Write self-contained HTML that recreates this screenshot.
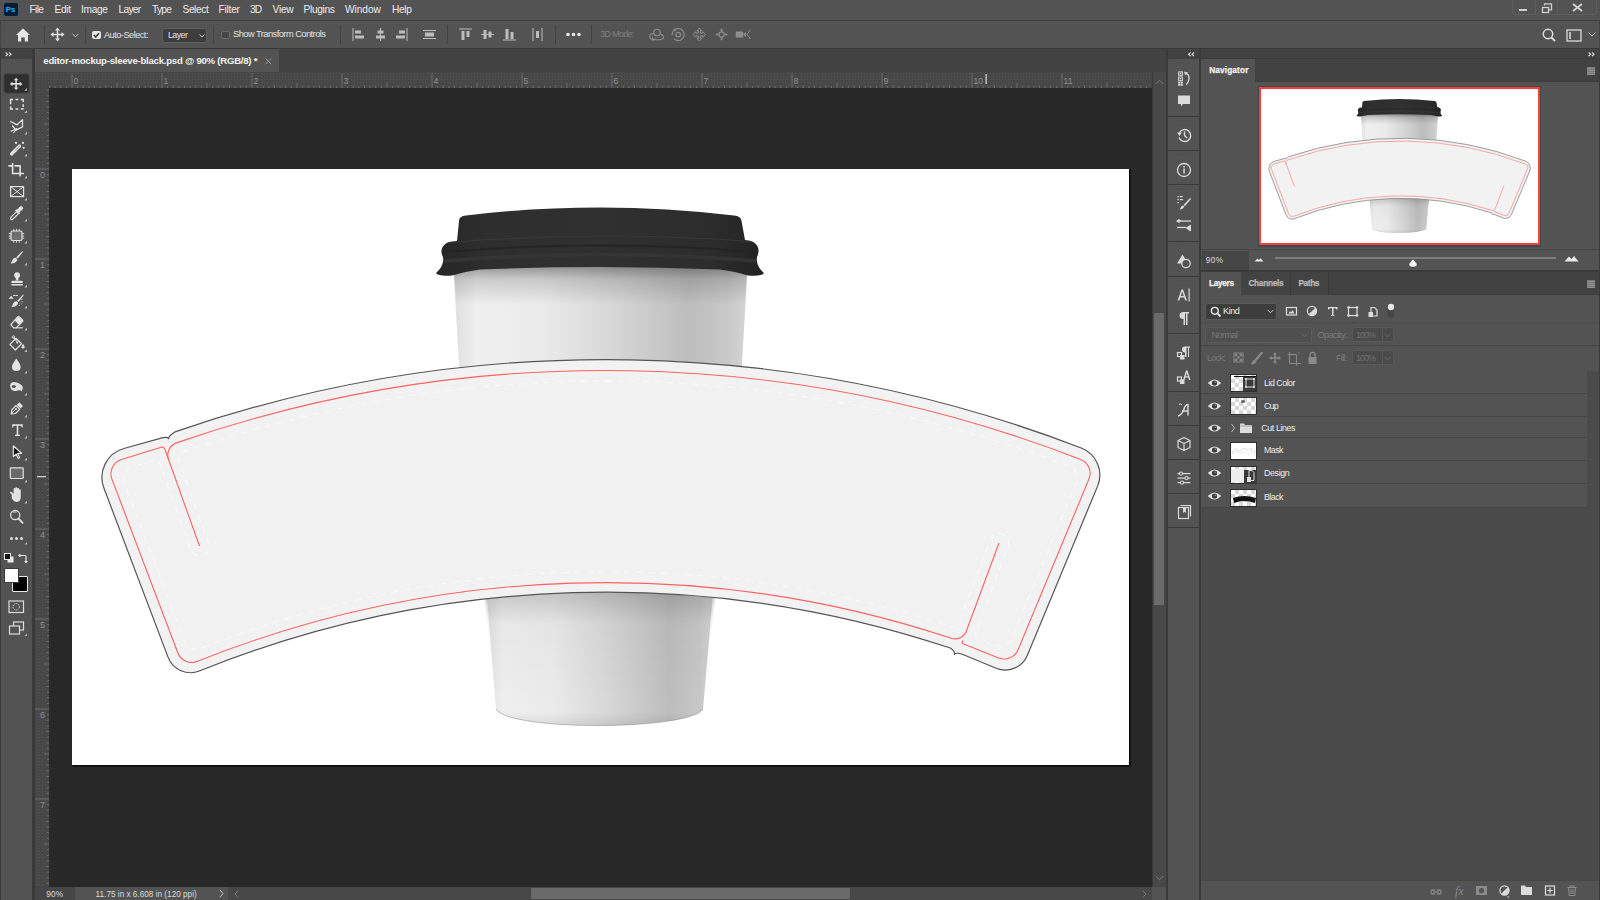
<!DOCTYPE html><html><head><meta charset='utf-8'><style>
*{margin:0;padding:0;box-sizing:border-box}
html,body{width:1600px;height:900px;overflow:hidden}
body{background:#535353;position:relative;font-family:"Liberation Sans",sans-serif;color:#e6e6e6;font-size:10px}
.a{position:absolute}
.t{position:absolute;white-space:nowrap;line-height:1}
svg{position:absolute;overflow:visible}
.dots2{background-color:#4b4b4b;background-image:radial-gradient(circle at 1px 1px,#505050 0.6px,transparent 0.7px);background-size:3px 3px}
.dots{background-color:#484848;background-image:radial-gradient(circle at 1px 1px,#525252 0.7px,transparent 0.8px);background-size:4px 4px}
</style></head><body><div class="a" style="left:0px;top:0px;width:1600px;height:20px;background:#535353;"></div>
<div class="a" style="left:0px;top:20px;width:1600px;height:1px;background:#3f3f3f;"></div>
<div class="a" style="left:4px;top:3px;width:14px;height:13px;background:#001e36;border-radius:2px"></div>
<div class="t" style="left:5.80px;top:5.83px;font-size:8px;color:#31a8ff;letter-spacing:0.000px;font-weight:bold;letter-spacing:-0.2px">Ps</div>
<div class="t" style="left:29.50px;top:5.27px;font-size:10.2px;color:#ececec;letter-spacing:-0.644px;">File</div>
<div class="t" style="left:54.50px;top:5.27px;font-size:10.2px;color:#ececec;letter-spacing:-0.358px;">Edit</div>
<div class="t" style="left:81.00px;top:5.27px;font-size:10.2px;color:#ececec;letter-spacing:-0.336px;">Image</div>
<div class="t" style="left:118.50px;top:5.27px;font-size:10.2px;color:#ececec;letter-spacing:-0.690px;">Layer</div>
<div class="t" style="left:151.90px;top:5.27px;font-size:10.2px;color:#ececec;letter-spacing:-0.671px;">Type</div>
<div class="t" style="left:182.50px;top:5.27px;font-size:10.2px;color:#ececec;letter-spacing:-0.419px;">Select</div>
<div class="t" style="left:218.50px;top:5.27px;font-size:10.2px;color:#ececec;letter-spacing:-0.233px;">Filter</div>
<div class="t" style="left:250.00px;top:5.27px;font-size:10.2px;color:#ececec;letter-spacing:-1.036px;">3D</div>
<div class="t" style="left:272.50px;top:5.27px;font-size:10.2px;color:#ececec;letter-spacing:-0.233px;">View</div>
<div class="t" style="left:303.50px;top:5.27px;font-size:10.2px;color:#ececec;letter-spacing:-0.326px;">Plugins</div>
<div class="t" style="left:345.00px;top:5.27px;font-size:10.2px;color:#ececec;letter-spacing:-0.060px;">Window</div>
<div class="t" style="left:392.00px;top:5.27px;font-size:10.2px;color:#ececec;letter-spacing:-0.327px;">Help</div>
<div class="a" style="left:1512px;top:-3px;width:85px;height:18px;border:1px solid #5e5e5e;border-radius:3px"></div>
<div class="a" style="left:1535px;top:0px;width:1px;height:15px;background:#5e5e5e;"></div>
<div class="a" style="left:1557px;top:0px;width:1px;height:15px;background:#5e5e5e;"></div>
<div class="a" style="left:1519px;top:9px;width:8px;height:2px;background:#d0d0d0;"></div>
<svg style="left:1541px;top:3px;" width="12" height="10" viewBox="0 0 12 10"><rect x="1.5" y="4.5" width="6" height="5" fill="none" stroke="#d0d0d0" stroke-width="1.3"/><path d="M3.5 2.5V0.8h7v6H8" fill="none" stroke="#d0d0d0" stroke-width="1.3"/></svg>
<svg style="left:1572px;top:3px;" width="11" height="9" viewBox="0 0 11 9"><path d="M1 1L10 8M10 1L1 8" stroke="#d6d6d6" stroke-width="1.6"/></svg>
<div class="a" style="left:0px;top:21px;width:1600px;height:27px;background:#535353;"></div>
<div class="a" style="left:0px;top:48px;width:1600px;height:1px;background:#383838;"></div>
<div class="a" style="left:0px;top:21px;width:1px;height:27px;background:#454545;"></div>
<div class="a" style="left:1599px;top:21px;width:1px;height:27px;background:#454545;"></div>
<div class="a" style="left:4px;top:26px;width:1px;height:17px;border-left:1px dotted #4a4a4a"></div>
<svg style="left:16px;top:28px;" width="14" height="14" viewBox="0 0 14 14"><path d="M7 0.5L14 7H12V13.5H8.8V9.5H5.2V13.5H2V7H0Z" fill="#e8e8e8"/></svg>
<div class="a" style="left:44px;top:25px;width:1px;height:19px;background:#424242;"></div>
<svg style="left:50px;top:27px;" width="15" height="15" viewBox="0 0 15 15"><path d="M7.5 0.5L10 3.5H8.3V6.7H11.5V5L14.5 7.5L11.5 10V8.3H8.3V11.5H10L7.5 14.5L5 11.5H6.7V8.3H3.5V10L0.5 7.5L3.5 5V6.7H6.7V3.5H5Z" fill="#e0e0e0"/></svg>
<svg style="left:72px;top:33px;" width="7" height="5" viewBox="0 0 7 5"><path d="M0.5 0.8L3.5 3.8L6.5 0.8" fill="none" stroke="#c8c8c8" stroke-width="1"/></svg>
<div class="a" style="left:85px;top:25px;width:1px;height:19px;background:#424242;"></div>
<div class="a" style="left:92px;top:30.5px;width:8.5px;height:8px;background:#e8e8e8;border-radius:2px"></div>
<svg style="left:92px;top:30.5px;" width="9" height="8" viewBox="0 0 9 8"><path d="M1.8 4L3.8 6L7 2.2" fill="none" stroke="#2a2a2a" stroke-width="1.5"/></svg>
<div class="t" style="left:104.00px;top:30.51px;font-size:9.2px;color:#e2e2e2;letter-spacing:-0.510px;">Auto-Select:</div>
<div class="a" style="left:162px;top:28px;width:45px;height:15px;background:#3d3d3d;border:1px solid #5e5e5e;border-radius:3px"></div>
<div class="t" style="left:168.00px;top:31.17px;font-size:8.9px;color:#e2e2e2;letter-spacing:-0.565px;">Layer</div>
<svg style="left:199px;top:34px;" width="6" height="4" viewBox="0 0 6 4"><path d="M0.5 0.5L3 3L5.5 0.5" fill="none" stroke="#c8c8c8" stroke-width="1"/></svg>
<div class="a" style="left:213px;top:25px;width:1px;height:19px;background:#424242;"></div>
<div class="a" style="left:221px;top:30.5px;width:8.5px;height:8px;background:#454545;border:1px solid #6a6a6a;border-radius:2px"></div>
<div class="t" style="left:233.00px;top:30.43px;font-size:9.3px;color:#e2e2e2;letter-spacing:-0.542px;">Show Transform Controls</div>
<div class="a" style="left:340px;top:25px;width:1px;height:19px;background:#424242;"></div>
<svg style="left:352px;top:28px;" width="13" height="13" viewBox="0 0 13 13"><rect x="0.5" y="0" width="1" height="13" fill="#bdbdbd"/><rect x="3" y="2.5" width="6" height="3" fill="#bdbdbd"/><rect x="3" y="7.5" width="9" height="3" fill="#bdbdbd"/></svg>
<svg style="left:374px;top:28px;" width="13" height="13" viewBox="0 0 13 13"><rect x="6" y="0" width="1" height="13" fill="#bdbdbd"/><rect x="3.5" y="2.5" width="6" height="3" fill="#bdbdbd"/><rect x="2" y="7.5" width="9" height="3" fill="#bdbdbd"/></svg>
<svg style="left:395px;top:28px;" width="13" height="13" viewBox="0 0 13 13"><rect x="11.5" y="0" width="1" height="13" fill="#bdbdbd"/><rect x="4" y="2.5" width="6" height="3" fill="#bdbdbd"/><rect x="1" y="7.5" width="9" height="3" fill="#bdbdbd"/></svg>
<svg style="left:422px;top:28px;" width="15" height="13" viewBox="0 0 15 13"><rect x="1" y="2" width="13" height="1" fill="#bdbdbd"/><rect x="3" y="4.5" width="9" height="4" fill="#bdbdbd"/><rect x="1" y="10" width="13" height="1" fill="#bdbdbd"/></svg>
<div class="a" style="left:447px;top:25px;width:1px;height:19px;background:#424242;"></div>
<svg style="left:459px;top:28px;" width="13" height="13" viewBox="0 0 13 13"><rect x="0" y="0.5" width="13" height="1" fill="#bdbdbd"/><rect x="2.5" y="3" width="3" height="9" fill="#bdbdbd"/><rect x="7.5" y="3" width="3" height="6" fill="#bdbdbd"/></svg>
<svg style="left:481px;top:28px;" width="13" height="13" viewBox="0 0 13 13"><rect x="0" y="6" width="13" height="1" fill="#bdbdbd"/><rect x="2.5" y="2" width="3" height="9" fill="#bdbdbd"/><rect x="7.5" y="3.5" width="3" height="6" fill="#bdbdbd"/></svg>
<svg style="left:503px;top:28px;" width="13" height="13" viewBox="0 0 13 13"><rect x="0" y="11.5" width="13" height="1" fill="#bdbdbd"/><rect x="2.5" y="1" width="3" height="10" fill="#bdbdbd"/><rect x="7.5" y="4" width="3" height="7" fill="#bdbdbd"/></svg>
<svg style="left:532px;top:28px;" width="11" height="13" viewBox="0 0 11 13"><rect x="0.5" y="0" width="1" height="13" fill="#bdbdbd"/><rect x="4" y="3" width="3" height="7" fill="#bdbdbd"/><rect x="9.5" y="0" width="1" height="13" fill="#bdbdbd"/></svg>
<div class="a" style="left:555px;top:25px;width:1px;height:19px;background:#424242;"></div>
<svg style="left:566px;top:32px;" width="15" height="5" viewBox="0 0 15 5"><circle cx="2" cy="2.5" r="1.8" fill="#e8e8e8"/><circle cx="7.5" cy="2.5" r="1.8" fill="#e8e8e8"/><circle cx="13" cy="2.5" r="1.8" fill="#e8e8e8"/></svg>
<div class="a" style="left:591px;top:25px;width:1px;height:19px;background:#424242;"></div>
<div class="t" style="left:600.00px;top:30.33px;font-size:9.3px;color:#7e7e7e;letter-spacing:-0.831px;">3D Mode:</div>
<svg style="left:640px;top:22px;" width="120" height="26" viewBox="0 0 120 26"><circle cx="17" cy="10.6" r="3.3" fill="none" stroke="#8e8e8e" stroke-width="1.1"/><path d="M13.8 11.5Q9.5 11.5 9.8 14.5Q10.2 17.5 14 17.8H19.5Q23.5 17.5 23.5 15Q23.3 12.8 20.3 12" fill="none" stroke="#8e8e8e" stroke-width="1.1"/><path d="M12 15.2L15.8 17.8L12 18.8Z" fill="#8e8e8e"/><circle cx="38.2" cy="12.5" r="6" fill="none" stroke="#8e8e8e" stroke-width="1.1" stroke-dasharray="30 4" transform="rotate(200 38.2 12.5)"/><circle cx="38.2" cy="12.5" r="2.3" fill="none" stroke="#8e8e8e" stroke-width="1.1"/><path d="M33.5 7L37 6.3L35 9.5Z" fill="#8e8e8e"/><path d="M59.4 6L61.8 8.6H60.4V11.1H62.9V9.7L65.5 12.5L62.9 15.3V13.9H60.4V16.4H61.8L59.4 19L57 16.4H58.4V13.9H55.9V15.3L53.3 12.5L55.9 9.7V11.1H58.4V8.6H57Z" fill="none" stroke="#8e8e8e" stroke-width="1"/><circle cx="81.6" cy="12.5" r="2.6" fill="none" stroke="#8e8e8e" stroke-width="1.2"/><path d="M81.6 6.3L83.3 8.5H79.9Z M81.6 18.7L83.3 16.5H79.9Z M75.4 12.5L77.6 10.8V14.2Z M87.8 12.5L85.6 10.8V14.2Z" fill="#8e8e8e"/><path d="M81.6 8.5V9.9M81.6 15.1V16.5M77.6 12.5H79M84.2 12.5H85.6" stroke="#8e8e8e" stroke-width="1.2"/><rect x="95.7" y="9.5" width="7.5" height="6" fill="#8e8e8e"/><path d="M103 12.5L106 10V15Z" fill="#8e8e8e"/><path d="M110.5 8L107 12.5L110.5 17" fill="none" stroke="#8e8e8e" stroke-width="1"/></svg>
<svg style="left:1542px;top:28px;" width="15" height="14" viewBox="0 0 15 14"><circle cx="6" cy="6" r="4.7" fill="none" stroke="#e0e0e0" stroke-width="1.5"/><path d="M9.3 9.3L13 13" stroke="#e0e0e0" stroke-width="1.8"/></svg>
<svg style="left:1566px;top:29px;" width="16" height="13" viewBox="0 0 16 13"><rect x="1" y="1" width="14" height="11" fill="none" stroke="#dadada" stroke-width="1.3"/><rect x="3" y="3" width="2" height="7" fill="#bdbdbd"/></svg>
<svg style="left:1588px;top:32px;" width="8" height="5" viewBox="0 0 8 5"><path d="M0.5 0.5L4 4L7.5 0.5" fill="none" stroke="#c8c8c8" stroke-width="1"/></svg>
<div class="a" style="left:0px;top:49px;width:1600px;height:851px;background:#3a3a3a;"></div>
<div class="a" style="left:1px;top:49px;width:31px;height:10px;background:#424242;"></div>
<svg style="left:4.5px;top:51.5px;" width="7" height="4.5" viewBox="0 0 7 4.5"><path d="M0.6 0.3L2.6 2.2L0.6 4.1M4 0.3L6 2.2L4 4.1" fill="none" stroke="#e8e8e8" stroke-width="1.1"/></svg>
<div class="a" style="left:1px;top:59px;width:31px;height:841px;background:#535353;"></div>
<div class="a" style="left:35px;top:49px;width:1131px;height:23px;background:#424242;"></div>
<div class="a" style="left:35px;top:49px;width:244px;height:23px;background:#535353;"></div>
<div class="t" style="left:43.30px;top:55.67px;font-size:9.6px;color:#f2f2f2;letter-spacing:-0.247px;font-weight:bold;">editor-mockup-sleeve-black.psd @ 90% (RGB/8) *</div>
<svg style="left:264.5px;top:57.5px;" width="7" height="7" viewBox="0 0 7 7"><path d="M0.5 0.5L6.2 6.2M6.2 0.5L0.5 6.2" stroke="#a0a0a0" stroke-width="0.9"/></svg>
<div class="a" style="left:35px;top:72px;width:1117px;height:16px;background:#474747;background-image:radial-gradient(circle at 1.5px 1.5px,#525252 0.55px,transparent 0.9px);background-size:3px 3px"></div>
<div class="a" style="left:35px;top:88px;width:14px;height:799px;background:#474747;background-image:radial-gradient(circle at 1.5px 1.5px,#525252 0.55px,transparent 0.9px);background-size:3px 3px"></div>
<div class="a" style="left:49px;top:88px;width:1103px;height:799px;background:#282828;"></div>
<div class="a" style="left:1152px;top:72px;width:14px;height:815px;background:#4a4a4a;background-image:radial-gradient(circle at 1px 1px,#434343 0.5px,transparent 0.8px);background-size:2px 2px"></div>
<div class="a" style="left:1152px;top:72px;width:1px;height:815px;background:#393939;"></div>
<svg style="left:1155px;top:79px;" width="9" height="6" viewBox="0 0 9 6"><path d="M0.8 5L4.5 1.3L8.2 5" fill="none" stroke="#7a7a7a" stroke-width="1"/></svg>
<div class="a" style="left:1154px;top:313px;width:10px;height:292px;background:#6a6a6a;"></div>
<svg style="left:1155px;top:875px;" width="9" height="6" viewBox="0 0 9 6"><path d="M0.8 1L4.5 4.7L8.2 1" fill="none" stroke="#7a7a7a" stroke-width="1"/></svg>
<div class="a" style="left:35px;top:887px;width:1131px;height:13px;background:#535353;"></div>
<div class="a" style="left:35px;top:887px;width:40px;height:13px;background:#474747;background-image:radial-gradient(circle at 1px 1px,#434343 0.5px,transparent 0.8px);background-size:2px 2px"></div>
<div class="t" style="left:46.25px;top:891.26px;font-size:8.2px;color:#dcdcdc;letter-spacing:0.246px;">90%</div>
<div class="t" style="left:95.60px;top:891.26px;font-size:8.2px;color:#dcdcdc;letter-spacing:0.009px;">11.75 in x 6.608 in (120 ppi)</div>
<svg style="left:219px;top:889px;" width="5" height="9" viewBox="0 0 5 9"><path d="M0.8 0.8L4 4.5L0.8 8.2" fill="none" stroke="#c8c8c8" stroke-width="1"/></svg>
<div class="a" style="left:228px;top:887px;width:924px;height:13px;background:#4a4a4a;background-image:radial-gradient(circle at 1px 1px,#434343 0.5px,transparent 0.8px);background-size:2px 2px"></div>
<svg style="left:234px;top:890px;" width="5" height="8" viewBox="0 0 5 8"><path d="M4 0.8L1 4L4 7.2" fill="none" stroke="#7a7a7a" stroke-width="1"/></svg>
<div class="a" style="left:531px;top:888px;width:319px;height:11px;background:#6a6a6a;"></div>
<svg style="left:1142px;top:890px;" width="5" height="8" viewBox="0 0 5 8"><path d="M1 0.8L4 4L1 7.2" fill="none" stroke="#7a7a7a" stroke-width="1"/></svg>
<div class="a" style="left:1168px;top:49px;width:31px;height:10px;background:#424242;"></div>
<svg style="left:1188px;top:51.5px;" width="7" height="4.5" viewBox="0 0 7 4.5"><path d="M2.6 0.3L0.6 2.2L2.6 4.1M6 0.3L4 2.2L6 4.1" fill="none" stroke="#e8e8e8" stroke-width="1.1"/></svg>
<div class="a" style="left:1168px;top:59px;width:31px;height:57px;background:#535353;"></div>
<div class="a" style="left:1176px;top:62px;width:14px;height:1px;border-top:1px dotted #4c4c4c"></div>
<div class="a" style="left:1168px;top:117px;width:31px;height:33px;background:#535353;"></div>
<div class="a" style="left:1176px;top:120px;width:14px;height:1px;border-top:1px dotted #4c4c4c"></div>
<div class="a" style="left:1168px;top:151px;width:31px;height:33px;background:#535353;"></div>
<div class="a" style="left:1176px;top:154px;width:14px;height:1px;border-top:1px dotted #4c4c4c"></div>
<div class="a" style="left:1168px;top:185px;width:31px;height:56px;background:#535353;"></div>
<div class="a" style="left:1176px;top:188px;width:14px;height:1px;border-top:1px dotted #4c4c4c"></div>
<div class="a" style="left:1168px;top:242px;width:31px;height:34px;background:#535353;"></div>
<div class="a" style="left:1176px;top:245px;width:14px;height:1px;border-top:1px dotted #4c4c4c"></div>
<div class="a" style="left:1168px;top:277px;width:31px;height:56px;background:#535353;"></div>
<div class="a" style="left:1176px;top:280px;width:14px;height:1px;border-top:1px dotted #4c4c4c"></div>
<div class="a" style="left:1168px;top:334px;width:31px;height:57px;background:#535353;"></div>
<div class="a" style="left:1176px;top:337px;width:14px;height:1px;border-top:1px dotted #4c4c4c"></div>
<div class="a" style="left:1168px;top:392px;width:31px;height:33px;background:#535353;"></div>
<div class="a" style="left:1176px;top:395px;width:14px;height:1px;border-top:1px dotted #4c4c4c"></div>
<div class="a" style="left:1168px;top:426px;width:31px;height:33px;background:#535353;"></div>
<div class="a" style="left:1176px;top:429px;width:14px;height:1px;border-top:1px dotted #4c4c4c"></div>
<div class="a" style="left:1168px;top:460px;width:31px;height:33px;background:#535353;"></div>
<div class="a" style="left:1176px;top:463px;width:14px;height:1px;border-top:1px dotted #4c4c4c"></div>
<div class="a" style="left:1168px;top:494px;width:31px;height:33px;background:#535353;"></div>
<div class="a" style="left:1176px;top:497px;width:14px;height:1px;border-top:1px dotted #4c4c4c"></div>
<div class="a" style="left:1168px;top:528px;width:31px;height:372px;background:#535353;"></div>
<div class="a" style="left:1201px;top:49px;width:399px;height:10px;background:#424242;"></div>
<svg style="left:1588px;top:51.5px;" width="7" height="4.5" viewBox="0 0 7 4.5"><path d="M0.6 0.3L2.6 2.2L0.6 4.1M4 0.3L6 2.2L4 4.1" fill="none" stroke="#e8e8e8" stroke-width="1.1"/></svg>
<div class="a" style="left:1201px;top:59px;width:398px;height:23px;background:#424242;"></div>
<div class="a" style="left:1201px;top:59px;width:54px;height:23px;background:#535353;"></div>
<div class="t" style="left:1209.20px;top:65.57px;font-size:8.3px;color:#f0f0f0;letter-spacing:0.115px;font-weight:bold;-webkit-text-stroke:0.25px currentColor">Navigator</div>
<svg style="left:1587px;top:66.5px;" width="8" height="8" viewBox="0 0 8 8"><rect x="0" y="0.5" width="8" height="1.2" fill="#b0b0b0"/><rect x="0" y="2.5" width="8" height="1.2" fill="#b0b0b0"/><rect x="0" y="4.5" width="8" height="1.2" fill="#b0b0b0"/><rect x="0" y="6.5" width="8" height="1.2" fill="#b0b0b0"/></svg>
<div class="a" style="left:1201px;top:58px;width:398px;height:1px;background:#3a3a3a;"></div>
<div class="a" style="left:1255px;top:81px;width:344px;height:1px;background:#3c3c3c;"></div>
<div class="a" style="left:1201px;top:82px;width:398px;height:167px;background:#535353;"></div>
<div class="a" style="left:1258px;top:86px;width:283px;height:161px;background:#3d4848;"></div>
<div class="a" style="left:1259px;top:87px;width:281px;height:158px;background:#ff3c3c;"></div>
<div class="a" style="left:1261px;top:89px;width:277px;height:154px;background:#ffffff;"></div>
<div class="a" style="left:1201px;top:249px;width:398px;height:1px;background:#474747;"></div>
<div class="a" style="left:1201px;top:250px;width:398px;height:20px;background:#535353;"></div>
<div class="a" style="left:1202px;top:251px;width:47px;height:19px;background:#474747;background-image:radial-gradient(circle at 1px 1px,#434343 0.5px,transparent 0.8px);background-size:2px 2px"></div>
<div class="t" style="left:1205.70px;top:257.36px;font-size:8.2px;color:#dcdcdc;letter-spacing:0.446px;">90%</div>
<svg style="left:1254px;top:257px;" width="10" height="5" viewBox="0 0 10 5"><path d="M0.5 4.5L3.5 1.5L5 3L6.5 1.2L9.5 4.5Z" fill="#e8e8e8"/></svg>
<div class="a" style="left:1275px;top:257px;width:281px;height:2px;background:#7c7c7c;"></div>
<svg style="left:1407.5px;top:257.5px;" width="10" height="10" viewBox="0 0 10 10"><path d="M5 0.6L9.2 5.8Q9.6 9.3 5 9.3Q0.4 9.3 0.8 5.8Z" fill="#f0f0f0" stroke="#3a3a3a" stroke-width="0.8"/></svg>
<svg style="left:1564px;top:255px;" width="15" height="7" viewBox="0 0 15 7"><path d="M0.5 6.5L5 1.5L7.5 4L10 1L14.5 6.5Z" fill="#e8e8e8"/></svg>
<div class="a" style="left:1201px;top:272px;width:398px;height:23px;background:#424242;"></div>
<div class="a" style="left:1201px;top:272px;width:40px;height:23px;background:#535353;"></div>
<div class="a" style="left:1241px;top:272px;width:49px;height:23px;background:#434343;"></div>
<div class="a" style="left:1290px;top:272px;width:38px;height:23px;background:#434343;"></div>
<div class="a" style="left:1290px;top:273px;width:1px;height:22px;background:#3a3a3a;"></div>
<div class="a" style="left:1328px;top:273px;width:1px;height:22px;background:#3a3a3a;"></div>
<div class="t" style="left:1209.00px;top:278.77px;font-size:8.3px;color:#f0f0f0;letter-spacing:-0.334px;font-weight:bold;-webkit-text-stroke:0.25px currentColor">Layers</div>
<div class="t" style="left:1248.40px;top:278.77px;font-size:8.3px;color:#b8b8b8;letter-spacing:-0.294px;font-weight:bold;-webkit-text-stroke:0.25px currentColor">Channels</div>
<div class="t" style="left:1298.40px;top:278.77px;font-size:8.3px;color:#b8b8b8;letter-spacing:-0.375px;font-weight:bold;-webkit-text-stroke:0.25px currentColor">Paths</div>
<svg style="left:1587px;top:279.5px;" width="8" height="8" viewBox="0 0 8 8"><rect x="0" y="0.5" width="8" height="1.2" fill="#b0b0b0"/><rect x="0" y="2.5" width="8" height="1.2" fill="#b0b0b0"/><rect x="0" y="4.5" width="8" height="1.2" fill="#b0b0b0"/><rect x="0" y="6.5" width="8" height="1.2" fill="#b0b0b0"/></svg>
<div class="a" style="left:1328px;top:294px;width:271px;height:1px;background:#3c3c3c;"></div>
<div class="a" style="left:1201px;top:295px;width:398px;height:605px;background:#535353;"></div>
<div class="a" style="left:1205px;top:303px;width:72px;height:17px;background:#3d3d3d;border:1px solid #5a5a5a;border-radius:3px"></div>
<svg style="left:1210px;top:306px" width="12" height="12" viewBox="0 0 12 12"><circle cx="4.8" cy="4.8" r="3.4" fill="none" stroke="#e8e8e8" stroke-width="1.4"/><path d="M7.2 7.2L10.5 10.5" stroke="#e8e8e8" stroke-width="1.8"/></svg>
<div class="t" style="left:1223.10px;top:306.78px;font-size:9px;color:#ececec;letter-spacing:-0.470px;">Kind</div>
<svg style="left:1267px;top:309px" width="7" height="5" viewBox="0 0 7 5"><path d="M0.5 0.8L3.5 3.8L6.5 0.8" fill="none" stroke="#c8c8c8" stroke-width="1"/></svg>
<svg style="left:1284px;top:302px" width="116" height="18" viewBox="0 0 116 18"><rect x="2.5" y="5.5" width="10" height="7.5" fill="none" stroke="#dcdcdc" stroke-width="1.2"/><path d="M4.5 11.5L6 9L7 10.5L8.5 8L10.5 11.5Z" fill="#dcdcdc"/><circle cx="28" cy="9" r="4.6" fill="none" stroke="#dcdcdc" stroke-width="1.2"/><path d="M31.3 5.7A4.6 4.6 0 0 1 24.7 12.3Z" fill="#dcdcdc"/><path d="M44 5H53.5V7.5H52.5Q52.3 6.3 51 6.3H49.5V12.5Q49.5 13 50.5 13V13.8H47V13Q48 13 48 12.5V6.3H46.5Q45.2 6.3 45 7.5H44Z" fill="#dcdcdc"/><rect x="64.5" y="5.5" width="8.5" height="8" fill="none" stroke="#dcdcdc" stroke-width="1.2"/><circle cx="64.5" cy="5.5" r="1.3" fill="#dcdcdc"/><circle cx="73" cy="5.5" r="1.3" fill="#dcdcdc"/><circle cx="64.5" cy="13.5" r="1.3" fill="#dcdcdc"/><circle cx="73" cy="13.5" r="1.3" fill="#dcdcdc"/><path d="M87 5.5H90.5L93 8V14H87Z" fill="none" stroke="#dcdcdc" stroke-width="1.2"/><rect x="84.5" y="10" width="4.5" height="5" fill="#dcdcdc"/><rect x="103.5" y="1.5" width="7" height="14" rx="3.5" fill="#454545" stroke="#4d4d4d" stroke-width="0.8"/><circle cx="107" cy="5" r="3.2" fill="#e8e8e8"/></svg>
<div class="a" style="left:1201px;top:322px;width:398px;height:1px;border-top:1px dotted #474747"></div>
<div class="a" style="left:1205px;top:327px;width:107px;height:16px;background:#4f4f4f;border:1px solid #5a5a5a;border-radius:3px"></div>
<div class="t" style="left:1211.50px;top:330.68px;font-size:9px;color:#7a7a7a;letter-spacing:-0.481px;">Normal</div>
<svg style="left:1301px;top:333px" width="7" height="5" viewBox="0 0 7 5"><path d="M0.5 0.8L3.5 3.8L6.5 0.8" fill="none" stroke="#6a6a6a" stroke-width="1"/></svg>
<div class="t" style="left:1317.50px;top:330.68px;font-size:9px;color:#7a7a7a;letter-spacing:-0.430px;">Opacity:</div>
<div class="a" style="left:1352px;top:327px;width:42px;height:15px;background:#4a4a4a;border:1px solid #595959;border-radius:2px"></div>
<div class="a" style="left:1382px;top:327px;width:1px;height:15px;background:#595959"></div>
<div class="t" style="left:1356.00px;top:330.68px;font-size:9px;color:#707070;letter-spacing:-1.007px;">100%</div>
<svg style="left:1384px;top:333px" width="7" height="5" viewBox="0 0 7 5"><path d="M0.5 0.8L3.5 3.8L6.5 0.8" fill="none" stroke="#6a6a6a" stroke-width="1"/></svg>
<div class="a" style="left:1201px;top:345px;width:398px;height:1px;background:#474747"></div>
<div class="t" style="left:1207.00px;top:353.88px;font-size:9px;color:#7a7a7a;letter-spacing:-0.728px;">Lock:</div>
<svg style="left:1230px;top:349px" width="95" height="18" viewBox="0 0 95 18" fill="#8a8a8a"><rect x="4" y="4" width="9" height="9" fill="none" stroke="#8a8a8a" stroke-width="1"/><rect x="5" y="5" width="2.3" height="2.3"/><rect x="9.7" y="5" width="2.3" height="2.3"/><rect x="7.3" y="7.3" width="2.3" height="2.3"/><rect x="5" y="9.7" width="2.3" height="2.3"/><rect x="9.7" y="9.7" width="2.3" height="2.3"/><path d="M31.8 3.8L25.8 11" stroke="#8a8a8a" stroke-width="2.2" stroke-linecap="round"/><path d="M24.8 11Q22.3 11.3 21.8 13.8L20.8 15.6Q24.5 15.8 26.3 13.2Z"/><path d="M45 3L47 5.5H45.7V8.3H48.5V7L51 9L48.5 11V9.7H45.7V12.5H47L45 15L43 12.5H44.3V9.7H41.5V11L39 9L41.5 7V8.3H44.3V5.5H43Z"/><path d="M59.5 3V14.5H71M57.5 5.5H66.5V16.5" fill="none" stroke="#8a8a8a" stroke-width="1"/><path d="M68 3L70 4.5" stroke="#8a8a8a" stroke-width="0.8"/><path d="M80 8V6Q80 3.3 82.5 3.3Q85 3.3 85 6V8" fill="none" stroke="#8a8a8a" stroke-width="1.3"/><rect x="78.5" y="8" width="8" height="7"/></svg>
<div class="t" style="left:1336.00px;top:353.88px;font-size:9px;color:#7a7a7a;letter-spacing:-0.624px;">Fill:</div>
<div class="a" style="left:1352px;top:350px;width:42px;height:15px;background:#4a4a4a;border:1px solid #595959;border-radius:2px"></div>
<div class="a" style="left:1382px;top:350px;width:1px;height:15px;background:#595959"></div>
<div class="t" style="left:1356.00px;top:353.88px;font-size:9px;color:#707070;letter-spacing:-1.007px;">100%</div>
<svg style="left:1384px;top:356px" width="7" height="5" viewBox="0 0 7 5"><path d="M0.5 0.8L3.5 3.8L6.5 0.8" fill="none" stroke="#6a6a6a" stroke-width="1"/></svg>
<div class="a dots2" style="left:1201px;top:508px;width:386px;height:372px"></div>
<div class="a dots2" style="left:1587px;top:371px;width:12px;height:509px"></div>
<div class="a" style="left:1201px;top:371px;width:386px;height:23px;background:#535353;border-bottom:1px solid #474747"></div>
<div class="a" style="left:1226px;top:371px;width:1px;height:23px;background:#4c4c4c"></div>
<svg style="left:1207px;top:377.5px" width="15" height="10" viewBox="0 0 15 10"><path d="M0.8 5Q7.5 -2 14.2 5Q7.5 12 0.8 5Z" fill="#e4e4e4"/><circle cx="7.5" cy="5" r="2.6" fill="#3c3c3c"/><circle cx="8.3" cy="4.2" r="0.8" fill="#9a9a9a"/></svg>
<div class="t" style="left:1264.00px;top:379.17px;font-size:8.9px;color:#ececec;letter-spacing:-0.502px;">Lid Color</div>
<div class="a" style="left:1201px;top:394px;width:386px;height:23px;background:#535353;border-bottom:1px solid #474747"></div>
<div class="a" style="left:1226px;top:394px;width:1px;height:23px;background:#4c4c4c"></div>
<svg style="left:1207px;top:400.5px" width="15" height="10" viewBox="0 0 15 10"><path d="M0.8 5Q7.5 -2 14.2 5Q7.5 12 0.8 5Z" fill="#e4e4e4"/><circle cx="7.5" cy="5" r="2.6" fill="#3c3c3c"/><circle cx="8.3" cy="4.2" r="0.8" fill="#9a9a9a"/></svg>
<div class="t" style="left:1264.00px;top:402.17px;font-size:8.9px;color:#ececec;letter-spacing:-0.811px;">Cup</div>
<div class="a" style="left:1201px;top:417px;width:386px;height:21px;background:#535353;border-bottom:1px solid #474747"></div>
<div class="a" style="left:1226px;top:417px;width:1px;height:21px;background:#4c4c4c"></div>
<svg style="left:1207px;top:422.5px" width="15" height="10" viewBox="0 0 15 10"><path d="M0.8 5Q7.5 -2 14.2 5Q7.5 12 0.8 5Z" fill="#e4e4e4"/><circle cx="7.5" cy="5" r="2.6" fill="#3c3c3c"/><circle cx="8.3" cy="4.2" r="0.8" fill="#9a9a9a"/></svg>
<svg style="left:1229px;top:421.5px" width="26" height="12" viewBox="0 0 26 12"><path d="M2.5 2L5.5 6L2.5 10" fill="none" stroke="#bdbdbd" stroke-width="1"/><path d="M11 1.5H15L16 3H23V11H11Z" fill="#dcdcdc"/><rect x="11" y="3.5" width="12" height="0.8" fill="#9a9a9a"/></svg>
<div class="t" style="left:1261.30px;top:424.17px;font-size:8.9px;color:#ececec;letter-spacing:-0.413px;">Cut Lines</div>
<div class="a" style="left:1201px;top:438px;width:386px;height:23px;background:#535353;border-bottom:1px solid #474747"></div>
<div class="a" style="left:1226px;top:438px;width:1px;height:23px;background:#4c4c4c"></div>
<svg style="left:1207px;top:444.5px" width="15" height="10" viewBox="0 0 15 10"><path d="M0.8 5Q7.5 -2 14.2 5Q7.5 12 0.8 5Z" fill="#e4e4e4"/><circle cx="7.5" cy="5" r="2.6" fill="#3c3c3c"/><circle cx="8.3" cy="4.2" r="0.8" fill="#9a9a9a"/></svg>
<div class="t" style="left:1264.00px;top:446.17px;font-size:8.9px;color:#ececec;letter-spacing:-0.560px;">Mask</div>
<div class="a" style="left:1201px;top:461px;width:386px;height:23px;background:#535353;border-bottom:1px solid #474747"></div>
<div class="a" style="left:1226px;top:461px;width:1px;height:23px;background:#4c4c4c"></div>
<svg style="left:1207px;top:467.5px" width="15" height="10" viewBox="0 0 15 10"><path d="M0.8 5Q7.5 -2 14.2 5Q7.5 12 0.8 5Z" fill="#e4e4e4"/><circle cx="7.5" cy="5" r="2.6" fill="#3c3c3c"/><circle cx="8.3" cy="4.2" r="0.8" fill="#9a9a9a"/></svg>
<div class="t" style="left:1264.00px;top:469.17px;font-size:8.9px;color:#ececec;letter-spacing:-0.381px;">Design</div>
<div class="a" style="left:1201px;top:484px;width:386px;height:24px;background:#535353;border-bottom:1px solid #474747"></div>
<div class="a" style="left:1226px;top:484px;width:1px;height:24px;background:#4c4c4c"></div>
<svg style="left:1207px;top:491.0px" width="15" height="10" viewBox="0 0 15 10"><path d="M0.8 5Q7.5 -2 14.2 5Q7.5 12 0.8 5Z" fill="#e4e4e4"/><circle cx="7.5" cy="5" r="2.6" fill="#3c3c3c"/><circle cx="8.3" cy="4.2" r="0.8" fill="#9a9a9a"/></svg>
<div class="t" style="left:1264.00px;top:492.67px;font-size:8.9px;color:#ececec;letter-spacing:-0.545px;">Black</div>
<div class="a" style="left:1230px;top:373.5px;width:27px;height:18px;border:1px solid #2e2e2e;background-color:#fff;background-image:linear-gradient(45deg,#d8d8d8 25%,transparent 25%,transparent 75%,#d8d8d8 75%),linear-gradient(45deg,#d8d8d8 25%,transparent 25%,transparent 75%,#d8d8d8 75%);background-size:8px 8px;background-position:0 0,4px 4px"><div class="a" style="left:12px;top:1px;width:13px;height:15px;background:#3a3a3a"></div><div class="a" style="left:3px;top:1px;width:22px;height:1px;background:#111"></div></div>
<svg style="left:1244px;top:377px" width="12" height="12" viewBox="0 0 12 12"><rect x="2" y="2" width="8" height="8" fill="none" stroke="#e0e0e0" stroke-width="1"/><circle cx="2" cy="2" r="1.1" fill="#e0e0e0"/><circle cx="10" cy="2" r="1.1" fill="#e0e0e0"/><circle cx="2" cy="10" r="1.1" fill="#e0e0e0"/><circle cx="10" cy="10" r="1.1" fill="#e0e0e0"/></svg>
<div class="a" style="left:1230px;top:396.5px;width:27px;height:18px;border:1px solid #2e2e2e;background-color:#fff;background-image:linear-gradient(45deg,#d8d8d8 25%,transparent 25%,transparent 75%,#d8d8d8 75%),linear-gradient(45deg,#d8d8d8 25%,transparent 25%,transparent 75%,#d8d8d8 75%);background-size:8px 8px;background-position:0 0,4px 4px"><div class="a" style="left:10px;top:2px;width:4px;height:3px;background:#666;border-radius:2px"></div></div>
<div class="a" style="left:1230px;top:442px;width:27px;height:18px;border:1px solid #2e2e2e;background:#fff"></div>
<svg style="left:1231px;top:446px" width="25" height="10" viewBox="0 0 25 10"><path d="M1 6L5 3L9 5L13 2L17 4L21 3L24 6" fill="none" stroke="#b0b0b0" stroke-width="0.8" stroke-dasharray="1 1"/><path d="M1 8L5 5L9 8L13 5L17 8L21 5L24 8" fill="none" stroke="#c8c8c8" stroke-width="0.7" stroke-dasharray="1 1"/></svg>
<div class="a" style="left:1230px;top:465.5px;width:27px;height:18px;border:1px solid #2e2e2e;background-color:#fff;background-image:linear-gradient(45deg,#d8d8d8 25%,transparent 25%,transparent 75%,#d8d8d8 75%),linear-gradient(45deg,#d8d8d8 25%,transparent 25%,transparent 75%,#d8d8d8 75%);background-size:8px 8px;background-position:0 0,4px 4px"><div class="a" style="left:0;top:2px;width:13px;height:13px;background:#eee"></div><div class="a" style="left:13px;top:3px;width:13px;height:14px;background:#3a3a3a"></div></div>
<svg style="left:1245px;top:469px" width="11" height="14" viewBox="0 0 11 14"><path d="M4 1.5H7L9 3.5V11.5H4Z" fill="none" stroke="#e0e0e0" stroke-width="1"/><rect x="2" y="8" width="4" height="5" fill="#e0e0e0"/></svg>
<div class="a" style="left:1230px;top:488.5px;width:27px;height:18px;border:1px solid #2e2e2e;background-color:#fff;background-image:linear-gradient(45deg,#d8d8d8 25%,transparent 25%,transparent 75%,#d8d8d8 75%),linear-gradient(45deg,#d8d8d8 25%,transparent 25%,transparent 75%,#d8d8d8 75%);background-size:8px 8px;background-position:0 0,4px 4px"><svg class="a" style="left:1px;top:3px" width="25" height="12" viewBox="0 0 25 12"><path d="M1 5Q12 1 24 5L23 10Q12 6 2 10Z" fill="#111"/></svg></div>
<div class="a" style="left:1201px;top:880px;width:398px;height:1px;background:#474747"></div>
<svg style="left:1425px;top:881px" width="160" height="19" viewBox="0 0 160 19"><path d="M10 9H8Q6 9 6 11Q6 13 8 13H10M12 9H14Q16 9 16 11Q16 13 14 13H12M8.5 11H13.5" fill="none" stroke="#8a8a8a" stroke-width="1.3"/><text x="30" y="14" font-size="12" font-style="italic" fill="#8a8a8a" font-family="Liberation Serif">fx</text><rect x="51" y="5" width="11" height="9" fill="#8a8a8a"/><circle cx="56.5" cy="9.5" r="2.6" fill="#535353"/><circle cx="79.5" cy="9.5" r="4.6" fill="none" stroke="#dcdcdc" stroke-width="1.2"/><path d="M82.8 6.2A4.6 4.6 0 0 1 76.2 12.8Z" fill="#dcdcdc"/><path d="M82 15.5L84.5 15.5L83.2 17Z" fill="#dcdcdc"/><path d="M96 4.5H100L101 6H107V14H96Z" fill="#dcdcdc"/><rect x="120.5" y="5" width="9" height="9" fill="none" stroke="#dcdcdc" stroke-width="1.2"/><path d="M125 6.8V12.2M122.3 9.5H127.7" stroke="#dcdcdc" stroke-width="1.2"/><path d="M142.5 6.5H151.5M145 6.5V5H149V6.5M143.5 6.5L144.3 14.5H149.7L150.5 6.5M146 8V13M148 8V13" fill="none" stroke="#8a8a8a" stroke-width="1.1"/></svg>
<div class="a" style="left:8px;top:62px;width:17px;height:1px;border-top:1px dotted #4c4c4c"></div>
<svg style="left:0;top:0" width="32" height="660" viewBox="0 0 32 660"><rect x="4" y="74" width="25" height="19" rx="2" fill="#2f2f2f" stroke="#3f3f3f" stroke-width="1"/><path d="M16.1 77.7L18.5 80.3H16.9V83.1H19.7V81.5L22.4 83.9L19.7 86.3V84.7H16.9V87.5H18.5L16.1 90.1L13.7 87.5H15.3V84.7H12.5V86.3L9.9 83.9L12.5 81.5V83.1H15.3V80.3H13.7Z" fill="#dcdcdc"/><path d="M27 88V90.7H24.3Z" fill="#b8b8b8"/><path d="M10.6 102V99.5H13 M15.5 99.5H18.3 M20.8 99.5H23.2V102 M23.2 104.3V107 M23.2 109.2V109H20.8 M18.3 109H15.5 M13 109H10.6V106.6 M10.6 104.3V101.5" fill="none" stroke="#e2e2e2" stroke-width="1.5"/><path d="M27 110.3V113.0H24.3Z" fill="#b8b8b8"/><path d="M10.3 121.4L17.1 124.8L22.5 119.6V126.9L16 130.2L12.2 125.5" fill="none" stroke="#e2e2e2" stroke-width="1.3" stroke-linejoin="round"/><path d="M10.6 131.5L17 128.3M13.5 133L16.3 129" fill="none" stroke="#e2e2e2" stroke-width="1.2"/><path d="M27 131.8V134.5H24.3Z" fill="#b8b8b8"/><path d="M11.5 154L19.6 146" stroke="#e2e2e2" stroke-width="3.2" stroke-linecap="round"/><path d="M15.5 150.1L19.6 146" stroke="#8a8a8a" stroke-width="0.9" stroke-linecap="round"/><circle cx="16" cy="142.9" r="1.1" fill="#e2e2e2"/><circle cx="23" cy="142.9" r="1.1" fill="#e2e2e2"/><circle cx="23.7" cy="147.8" r="1.1" fill="#e2e2e2"/><path d="M27 153.8V156.5H24.3Z" fill="#b8b8b8"/><path d="M8.4 165.9H12.6 M12.6 162.9V173.5H21 M14.5 165.9H20.1V176.5 M20.1 173.5H23.9" fill="none" stroke="#e2e2e2" stroke-width="1.6"/><path d="M27 175.8V178.5H24.3Z" fill="#b8b8b8"/><rect x="10.6" y="186.6" width="13" height="10" fill="none" stroke="#e2e2e2" stroke-width="1.2"/><path d="M10.6 186.6L23.6 196.6M23.6 186.6L10.6 196.6" stroke="#e2e2e2" stroke-width="1"/><path d="M27 197.8V200.5H24.3Z" fill="#b8b8b8"/><path d="M11.2 219.5Q10 218.3 11 217.2L16.6 211.5L18.6 213.4L13 219.1Q12 220.2 11.2 219.5Z" fill="none" stroke="#e2e2e2" stroke-width="1.2"/><path d="M16 210.5L20 206.6Q21.3 205.5 22.6 206.8Q23.8 208 22.7 209.3L18.7 213.3Z" fill="#e2e2e2"/><path d="M15.6 209.7L19.6 213.7" stroke="#e2e2e2" stroke-width="1.6"/><path d="M27 218.8V221.5H24.3Z" fill="#b8b8b8"/><rect x="11" y="231" width="11" height="9.5" rx="1.5" fill="#6e6e6e" stroke="#e2e2e2" stroke-width="1.2"/><path d="M13.8 228.8V231M16.5 228.8V231M19.3 228.8V231M13.8 240.5V242.7M16.5 240.5V242.7M19.3 240.5V242.7M8.8 233.5H11M8.8 236H11M8.8 238.3H11M22 233.5H24.2M22 236H24.2M22 238.3H24.2" stroke="#e2e2e2" stroke-width="0.9"/><path d="M27 240.8V243.5H24.3Z" fill="#b8b8b8"/><path d="M22.3 251L23 251.7L17.8 258.6L16.3 257.3Z" fill="#e2e2e2"/><path d="M15.8 257.8Q13.3 257.8 12.3 260.2Q11.8 262 10.5 263.3Q14 263.8 16.2 261.8Q17.5 260.3 17.2 259Z" fill="#e2e2e2"/><path d="M27 262.8V265.5H24.3Z" fill="#b8b8b8"/><circle cx="17.1" cy="275.2" r="2.9" fill="#e2e2e2"/><rect x="15.8" y="277" width="2.6" height="3.5" fill="#e2e2e2"/><path d="M11.4 283V282.2Q11.4 280.8 12.8 280.8H21.4Q22.8 280.8 22.8 282.2V283Z" fill="#e2e2e2"/><rect x="11.4" y="284" width="11.4" height="1.5" fill="#e2e2e2"/><path d="M27 284.8V287.5H24.3Z" fill="#b8b8b8"/><path d="M23.2 294.5L23.8 295.2L18.6 302L17.2 300.8Z" fill="#e2e2e2"/><path d="M16.6 301.3Q14 301.3 13 303.7Q12.6 305.5 11.2 306.8Q14.8 307.3 17 305.3Q18.3 303.8 18 302.5Z" fill="#e2e2e2"/><path d="M8.8 298.8L11.2 295.8L13.6 298.8Z" fill="#e2e2e2"/><path d="M13 295.7Q15.5 295.2 18 295.7" fill="none" stroke="#e2e2e2" stroke-width="1"/><circle cx="21.8" cy="299.6" r="0.55" fill="#e2e2e2"/><circle cx="22.3" cy="301.8" r="0.55" fill="#e2e2e2"/><circle cx="21.1" cy="303.8" r="0.55" fill="#e2e2e2"/><circle cx="19.3" cy="305.4" r="0.55" fill="#e2e2e2"/><path d="M27 305.8V308.5H24.3Z" fill="#b8b8b8"/><path d="M10.8 324.6L17.7 316.8Q18.5 316 19.3 316.8L22.5 320Q23.3 320.8 22.5 321.6L16.2 327.8H13.6Z" fill="none" stroke="#e2e2e2" stroke-width="1.2" stroke-linejoin="round"/><path d="M14.3 320.2L17.7 316.8Q18.5 316 19.3 316.8L22.5 320Q23.3 320.8 22.5 321.6L19.3 324.9Z" fill="#e2e2e2"/><path d="M16 327.8H23" stroke="#e2e2e2" stroke-width="1.1"/><path d="M27 327.8V330.5H24.3Z" fill="#b8b8b8"/><path d="M9.9 344.3L15.9 338.3L21.6 343.7L15.4 350Z" fill="none" stroke="#e2e2e2" stroke-width="1.2" stroke-linejoin="round"/><path d="M13.6 337.3L17.3 342.3" stroke="#e2e2e2" stroke-width="1"/><circle cx="13.4" cy="337" r="1.2" fill="none" stroke="#e2e2e2" stroke-width="0.9"/><circle cx="17.3" cy="342.6" r="1.1" fill="#e2e2e2"/><path d="M23 343.8Q24.8 346 24.6 347.2Q24.3 348.5 23 348.5Q21.7 348.5 21.5 347.2Q21.4 346 23 343.8Z" fill="#e2e2e2"/><path d="M27 349.3V352.0H24.3Z" fill="#b8b8b8"/><path d="M16.3 358.4Q20.8 364.5 20.7 367Q20.6 371 16.3 371Q12 371 11.9 367Q11.8 364.5 16.3 358.4Z" fill="#e2e2e2"/><path d="M27 370.8V373.5H24.3Z" fill="#b8b8b8"/><path d="M10.2 385.3Q10.5 382 14.5 382Q18.5 382.2 21.8 385.3Q23.3 386.8 22.5 389.5L21.8 391.5Q20.5 390 19 390.2Q16.5 391.3 13.5 390.8Q10 390 10.2 385.3Z" fill="#e2e2e2"/><ellipse cx="13.8" cy="386.6" rx="2" ry="1.4" fill="#4a4a4a"/><path d="M27 392.8V395.5H24.3Z" fill="#b8b8b8"/><path d="M11.2 413.8L11.8 409.8L16 405.5L19.8 409.3L15.5 413.5Z" fill="none" stroke="#e2e2e2" stroke-width="1.2" stroke-linejoin="round"/><path d="M16.8 404.7L19.3 402.2L23 405.9L20.5 408.4Z" fill="#e2e2e2"/><path d="M11.6 413.4L15.7 409.3" stroke="#e2e2e2" stroke-width="0.9"/><circle cx="16" cy="409" r="1" fill="#e2e2e2"/><path d="M27 414.8V417.5H24.3Z" fill="#b8b8b8"/><path d="M12.2 424.3H22.8V427.5H21.9Q21.7 425.8 20.3 425.8H18.3V434.2Q18.3 434.8 19.3 434.8H20V436H15V434.8H15.7Q16.7 434.8 16.7 434.2V425.8H14.7Q13.3 425.8 13.1 427.5H12.2Z" fill="#e2e2e2"/><path d="M27 435.8V438.5H24.3Z" fill="#b8b8b8"/><path d="M13.3 445.8L21.6 453.3H17.6L19.6 457.8L18.2 458.5L16.2 454.1L13.3 456.5Z" fill="#111" stroke="#e2e2e2" stroke-width="1.2" stroke-linejoin="round"/><path d="M27 457.8V460.5H24.3Z" fill="#b8b8b8"/><rect x="10.3" y="467.9" width="12.9" height="10.6" rx="0.8" fill="#6a6a6a" stroke="#e2e2e2" stroke-width="1.2"/><path d="M27 479.8V482.5H24.3Z" fill="#b8b8b8"/><path d="M11.8 494.8L10.3 493.2Q9.6 492.3 10.5 491.8Q11.2 491.4 12 492.2L13.6 494V489Q13.6 488 14.5 488Q15.4 488 15.4 489V493V488.2Q15.4 487.2 16.3 487.2Q17.2 487.2 17.2 488.2V493V488.6Q17.2 487.7 18.1 487.7Q19 487.7 19 488.6V493.5V490.2Q19 489.3 19.9 489.3Q20.8 489.3 20.8 490.2V496.5Q20.8 502 16.2 502Q13.8 502 11.8 498.5Z" fill="#e2e2e2"/><path d="M27 500.8V503.5H24.3Z" fill="#b8b8b8"/><circle cx="15.2" cy="515.1" r="4.6" fill="none" stroke="#e2e2e2" stroke-width="1.3"/><path d="M18.6 518.6L22.6 522.8" stroke="#e2e2e2" stroke-width="1.8" stroke-linecap="round"/><path d="M13.3 512.5Q14.8 511.6 16.5 512.3" fill="none" stroke="#e2e2e2" stroke-width="0.8"/><circle cx="11.5" cy="538.4" r="1.5" fill="#e2e2e2"/><circle cx="16.5" cy="538.4" r="1.5" fill="#e2e2e2"/><circle cx="21.5" cy="538.4" r="1.5" fill="#e2e2e2"/><path d="M27 542V544.5H24.5Z" fill="#b8b8b8"/></svg>
<svg style="left:3px;top:553px" width="26" height="12" viewBox="0 0 26 12"><rect x="4.5" y="3.5" width="6" height="6" fill="#e8e8e8"/><rect x="1.5" y="0.5" width="6" height="6" fill="#111" stroke="#e8e8e8" stroke-width="1"/><path d="M16 2.5H22Q23 2.5 23 3.5V9" fill="none" stroke="#e8e8e8" stroke-width="1.2"/><path d="M15 2.5L17.5 0.5V4.5Z M23 10.5L21 8H25Z" fill="#e8e8e8"/></svg>
<div class="a" style="left:12px;top:576px;width:16px;height:16px;background:#000;border:1.5px solid #e6e6e6;border-radius:1px"></div>
<div class="a" style="left:4px;top:568px;width:15px;height:15px;background:#fff;border:1px solid #3a3a3a"></div>
<svg style="left:8px;top:600px" width="17" height="14" viewBox="0 0 17 14"><rect x="1" y="1" width="14.5" height="11.5" fill="none" stroke="#dcdcdc" stroke-width="1.2"/><circle cx="8.2" cy="6.8" r="3.2" fill="none" stroke="#dcdcdc" stroke-width="1" stroke-dasharray="1.2 0.9"/></svg>
<svg style="left:8px;top:621px" width="21" height="16" viewBox="0 0 21 16"><rect x="5.5" y="1" width="10" height="8" fill="none" stroke="#dcdcdc" stroke-width="1.2"/><rect x="1.5" y="5" width="10" height="8" fill="#535353" stroke="#dcdcdc" stroke-width="1.2"/><path d="M19 12.5V15H16.5Z" fill="#bdbdbd"/></svg>
<svg style="left:1174px;top:67px" width="20" height="20" viewBox="0 0 20 20"><rect x="4.6" y="4.9" width="3.8" height="3.4" fill="none" stroke="#dadada" stroke-width="1"/><circle cx="6.5" cy="6.6" r="0.8" fill="#dadada"/><rect x="4.6" y="10" width="3.8" height="3.4" fill="none" stroke="#dadada" stroke-width="1"/><circle cx="6.5" cy="11.7" r="0.8" fill="#dadada"/><rect x="4.1" y="14.6" width="4.8" height="4.2" fill="#dadada"/><path d="M6.5 14.6V18.8M4.1 16.7H8.9" stroke="#535353" stroke-width="0.5"/><path d="M11.5 6.2Q15.5 7.5 15 12Q14.6 15.3 12.3 17.5" fill="none" stroke="#dadada" stroke-width="1.3"/><path d="M10 4.8L14 5.2L11.3 8.3Z" fill="#dadada"/></svg>
<svg style="left:1174px;top:91px" width="20" height="20" viewBox="0 0 20 20"><path d="M4 4.5H16V13H9L7 15.5V13H4Z" fill="#dadada"/></svg>
<svg style="left:1174px;top:125px" width="20" height="20" viewBox="0 0 20 20"><path d="M5.5 7.5A6 6 0 1 1 5 12.5" fill="none" stroke="#dadada" stroke-width="1.4"/><path d="M3 7.5H8L5.5 11Z" fill="#dadada"/><path d="M10.5 6.5V10.5L13 13" fill="none" stroke="#dadada" stroke-width="1.4"/></svg>
<svg style="left:1174px;top:160px" width="20" height="20" viewBox="0 0 20 20"><circle cx="10" cy="10" r="6.5" fill="none" stroke="#dadada" stroke-width="1.3"/><rect x="9.3" y="8.5" width="1.5" height="5" fill="#dadada"/><rect x="9.3" y="6" width="1.5" height="1.5" fill="#dadada"/></svg>
<svg style="left:1174px;top:193px" width="20" height="20" viewBox="0 0 20 20"><rect x="3.5" y="3" width="1.3" height="1.3" fill="#dadada"/><rect x="3.5" y="6" width="1.3" height="1.3" fill="#dadada"/><rect x="3.5" y="9" width="1.3" height="1.3" fill="#dadada"/><rect x="5.8" y="3" width="3" height="1.2" fill="#dadada"/><rect x="5.8" y="6" width="3" height="1.2" fill="#dadada"/><path d="M9.5 12L16 5L17 6L11 13Z" fill="#dadada"/><path d="M9 12.5Q7 12.5 6.5 15L5.5 16.5Q9 16.5 10.5 13.5Z" fill="#dadada"/></svg>
<svg style="left:1174px;top:217px" width="20" height="20" viewBox="0 0 20 20"><path d="M2.5 3.5Q5 2 7.5 3.5Q5 6 2.5 4.5Z" fill="#dadada"/><rect x="7" y="3.4" width="10" height="1.3" fill="#dadada"/><rect x="3" y="9.8" width="9" height="1.3" fill="#dadada"/><path d="M12 10.4L17 7.5V14.5Q14.5 14 12 11Z" fill="#dadada"/><circle cx="5" cy="4" r="1.7" fill="#dadada"/></svg>
<svg style="left:1174px;top:251px" width="20" height="20" viewBox="0 0 20 20"><path d="M8.5 3.5L14 12.5H3Z" fill="#dadada"/><circle cx="12" cy="12.5" r="4.2" fill="#535353" stroke="#dadada" stroke-width="1.3"/></svg>
<svg style="left:1174px;top:285px" width="20" height="20" viewBox="0 0 20 20"><path d="M3.5 15.5L7.5 4.5H9L13 15.5H11.3L10.2 12.5H6.3L5.2 15.5ZM6.8 11H9.7L8.25 6.5Z" fill="#dadada"/><rect x="14.5" y="3.5" width="1.2" height="13" fill="#dadada"/></svg>
<svg style="left:1174px;top:308px" width="20" height="20" viewBox="0 0 20 20"><path d="M9.5 17V11Q5.5 11 5.5 7.5Q5.5 4 9.5 4H15V5.5H13.5V17H12V5.5H11V17Z" fill="#dadada"/></svg>
<svg style="left:1174px;top:343px" width="20" height="20" viewBox="0 0 20 20"><path d="M11 14V9.5Q8 9.5 8 6.5Q8 3.5 11 3.5H16V4.8H15V14H14V4.8H12.5V14Z" fill="#dadada"/><rect x="3.5" y="9.5" width="4" height="4" fill="none" stroke="#dadada" stroke-width="1.2"/><rect x="6" y="12" width="4.5" height="4.5" fill="#dadada"/></svg>
<svg style="left:1174px;top:367px" width="20" height="20" viewBox="0 0 20 20"><path d="M9 13L12 3.5H13.5L16.5 13H15L14.2 10.5H11.3L10.5 13ZM11.7 9.3H13.8L12.75 6Z" fill="#dadada"/><rect x="3.5" y="10" width="4" height="4" fill="none" stroke="#dadada" stroke-width="1.2"/><rect x="6" y="12.5" width="4.5" height="4.5" fill="#dadada"/></svg>
<svg style="left:1174px;top:400px" width="20" height="20" viewBox="0 0 20 20"><path d="M4 16Q8 15 10 9Q11.5 4.5 14 4.5V15.5M8 11H14" fill="none" stroke="#dadada" stroke-width="1.4"/><path d="M5 4.5Q7 3 8 5" fill="none" stroke="#dadada" stroke-width="1"/></svg>
<svg style="left:1174px;top:434px" width="20" height="20" viewBox="0 0 20 20"><path d="M10 3.5L16 6.5V13.5L10 16.5L4 13.5V6.5Z M4 6.5L10 9.5L16 6.5 M10 9.5V16.5" fill="none" stroke="#dadada" stroke-width="1.2" stroke-linejoin="round"/></svg>
<svg style="left:1174px;top:468px" width="20" height="20" viewBox="0 0 20 20"><rect x="3.5" y="5" width="13" height="1.2" fill="#dadada"/><rect x="3.5" y="9.5" width="13" height="1.2" fill="#dadada"/><rect x="3.5" y="14" width="13" height="1.2" fill="#dadada"/><circle cx="7" cy="5.6" r="1.6" fill="#535353" stroke="#dadada" stroke-width="1.1"/><circle cx="12.5" cy="10.1" r="1.6" fill="#535353" stroke="#dadada" stroke-width="1.1"/><circle cx="8" cy="14.6" r="1.6" fill="#535353" stroke="#dadada" stroke-width="1.1"/></svg>
<svg style="left:1174px;top:502px" width="20" height="20" viewBox="0 0 20 20"><rect x="4.5" y="5.5" width="10" height="11" fill="none" stroke="#dadada" stroke-width="1.2"/><path d="M6.5 3.5H16.5V14.5" fill="none" stroke="#dadada" stroke-width="1.2"/><path d="M9 5.5V11L10.5 9.8L12 11V5.5Z" fill="#dadada"/></svg>
<svg style="left:0;top:0" width="1600" height="900" viewBox="0 0 1600 900"><rect x="49.00" y="85.50" width="1" height="2.5" fill="#6c6c6c"/><rect x="54.62" y="86.00" width="1" height="2" fill="#6c6c6c"/><rect x="60.25" y="85.50" width="1" height="2.5" fill="#6c6c6c"/><rect x="65.88" y="86.00" width="1" height="2" fill="#6c6c6c"/><rect x="71.50" y="73.00" width="1" height="15" fill="#6c6c6c"/><rect x="77.12" y="86.00" width="1" height="2" fill="#6c6c6c"/><rect x="82.75" y="85.50" width="1" height="2.5" fill="#6c6c6c"/><rect x="88.38" y="86.00" width="1" height="2" fill="#6c6c6c"/><rect x="94.00" y="85.50" width="1" height="2.5" fill="#6c6c6c"/><rect x="99.62" y="86.00" width="1" height="2" fill="#6c6c6c"/><rect x="105.25" y="85.50" width="1" height="2.5" fill="#6c6c6c"/><rect x="110.88" y="86.00" width="1" height="2" fill="#6c6c6c"/><rect x="116.50" y="83.00" width="1" height="5" fill="#6c6c6c"/><rect x="122.12" y="86.00" width="1" height="2" fill="#6c6c6c"/><rect x="127.75" y="85.50" width="1" height="2.5" fill="#6c6c6c"/><rect x="133.38" y="86.00" width="1" height="2" fill="#6c6c6c"/><rect x="139.00" y="85.50" width="1" height="2.5" fill="#6c6c6c"/><rect x="144.62" y="86.00" width="1" height="2" fill="#6c6c6c"/><rect x="150.25" y="85.50" width="1" height="2.5" fill="#6c6c6c"/><rect x="155.88" y="86.00" width="1" height="2" fill="#6c6c6c"/><rect x="161.50" y="73.00" width="1" height="15" fill="#6c6c6c"/><rect x="167.12" y="86.00" width="1" height="2" fill="#6c6c6c"/><rect x="172.75" y="85.50" width="1" height="2.5" fill="#6c6c6c"/><rect x="178.38" y="86.00" width="1" height="2" fill="#6c6c6c"/><rect x="184.00" y="85.50" width="1" height="2.5" fill="#6c6c6c"/><rect x="189.62" y="86.00" width="1" height="2" fill="#6c6c6c"/><rect x="195.25" y="85.50" width="1" height="2.5" fill="#6c6c6c"/><rect x="200.88" y="86.00" width="1" height="2" fill="#6c6c6c"/><rect x="206.50" y="83.00" width="1" height="5" fill="#6c6c6c"/><rect x="212.12" y="86.00" width="1" height="2" fill="#6c6c6c"/><rect x="217.75" y="85.50" width="1" height="2.5" fill="#6c6c6c"/><rect x="223.38" y="86.00" width="1" height="2" fill="#6c6c6c"/><rect x="229.00" y="85.50" width="1" height="2.5" fill="#6c6c6c"/><rect x="234.62" y="86.00" width="1" height="2" fill="#6c6c6c"/><rect x="240.25" y="85.50" width="1" height="2.5" fill="#6c6c6c"/><rect x="245.88" y="86.00" width="1" height="2" fill="#6c6c6c"/><rect x="251.50" y="73.00" width="1" height="15" fill="#6c6c6c"/><rect x="257.12" y="86.00" width="1" height="2" fill="#6c6c6c"/><rect x="262.75" y="85.50" width="1" height="2.5" fill="#6c6c6c"/><rect x="268.38" y="86.00" width="1" height="2" fill="#6c6c6c"/><rect x="274.00" y="85.50" width="1" height="2.5" fill="#6c6c6c"/><rect x="279.62" y="86.00" width="1" height="2" fill="#6c6c6c"/><rect x="285.25" y="85.50" width="1" height="2.5" fill="#6c6c6c"/><rect x="290.88" y="86.00" width="1" height="2" fill="#6c6c6c"/><rect x="296.50" y="83.00" width="1" height="5" fill="#6c6c6c"/><rect x="302.12" y="86.00" width="1" height="2" fill="#6c6c6c"/><rect x="307.75" y="85.50" width="1" height="2.5" fill="#6c6c6c"/><rect x="313.38" y="86.00" width="1" height="2" fill="#6c6c6c"/><rect x="319.00" y="85.50" width="1" height="2.5" fill="#6c6c6c"/><rect x="324.62" y="86.00" width="1" height="2" fill="#6c6c6c"/><rect x="330.25" y="85.50" width="1" height="2.5" fill="#6c6c6c"/><rect x="335.88" y="86.00" width="1" height="2" fill="#6c6c6c"/><rect x="341.50" y="73.00" width="1" height="15" fill="#6c6c6c"/><rect x="347.12" y="86.00" width="1" height="2" fill="#6c6c6c"/><rect x="352.75" y="85.50" width="1" height="2.5" fill="#6c6c6c"/><rect x="358.38" y="86.00" width="1" height="2" fill="#6c6c6c"/><rect x="364.00" y="85.50" width="1" height="2.5" fill="#6c6c6c"/><rect x="369.62" y="86.00" width="1" height="2" fill="#6c6c6c"/><rect x="375.25" y="85.50" width="1" height="2.5" fill="#6c6c6c"/><rect x="380.88" y="86.00" width="1" height="2" fill="#6c6c6c"/><rect x="386.50" y="83.00" width="1" height="5" fill="#6c6c6c"/><rect x="392.12" y="86.00" width="1" height="2" fill="#6c6c6c"/><rect x="397.75" y="85.50" width="1" height="2.5" fill="#6c6c6c"/><rect x="403.38" y="86.00" width="1" height="2" fill="#6c6c6c"/><rect x="409.00" y="85.50" width="1" height="2.5" fill="#6c6c6c"/><rect x="414.62" y="86.00" width="1" height="2" fill="#6c6c6c"/><rect x="420.25" y="85.50" width="1" height="2.5" fill="#6c6c6c"/><rect x="425.88" y="86.00" width="1" height="2" fill="#6c6c6c"/><rect x="431.50" y="73.00" width="1" height="15" fill="#6c6c6c"/><rect x="437.12" y="86.00" width="1" height="2" fill="#6c6c6c"/><rect x="442.75" y="85.50" width="1" height="2.5" fill="#6c6c6c"/><rect x="448.38" y="86.00" width="1" height="2" fill="#6c6c6c"/><rect x="454.00" y="85.50" width="1" height="2.5" fill="#6c6c6c"/><rect x="459.62" y="86.00" width="1" height="2" fill="#6c6c6c"/><rect x="465.25" y="85.50" width="1" height="2.5" fill="#6c6c6c"/><rect x="470.88" y="86.00" width="1" height="2" fill="#6c6c6c"/><rect x="476.50" y="83.00" width="1" height="5" fill="#6c6c6c"/><rect x="482.12" y="86.00" width="1" height="2" fill="#6c6c6c"/><rect x="487.75" y="85.50" width="1" height="2.5" fill="#6c6c6c"/><rect x="493.38" y="86.00" width="1" height="2" fill="#6c6c6c"/><rect x="499.00" y="85.50" width="1" height="2.5" fill="#6c6c6c"/><rect x="504.62" y="86.00" width="1" height="2" fill="#6c6c6c"/><rect x="510.25" y="85.50" width="1" height="2.5" fill="#6c6c6c"/><rect x="515.88" y="86.00" width="1" height="2" fill="#6c6c6c"/><rect x="521.50" y="73.00" width="1" height="15" fill="#6c6c6c"/><rect x="527.12" y="86.00" width="1" height="2" fill="#6c6c6c"/><rect x="532.75" y="85.50" width="1" height="2.5" fill="#6c6c6c"/><rect x="538.38" y="86.00" width="1" height="2" fill="#6c6c6c"/><rect x="544.00" y="85.50" width="1" height="2.5" fill="#6c6c6c"/><rect x="549.62" y="86.00" width="1" height="2" fill="#6c6c6c"/><rect x="555.25" y="85.50" width="1" height="2.5" fill="#6c6c6c"/><rect x="560.88" y="86.00" width="1" height="2" fill="#6c6c6c"/><rect x="566.50" y="83.00" width="1" height="5" fill="#6c6c6c"/><rect x="572.12" y="86.00" width="1" height="2" fill="#6c6c6c"/><rect x="577.75" y="85.50" width="1" height="2.5" fill="#6c6c6c"/><rect x="583.38" y="86.00" width="1" height="2" fill="#6c6c6c"/><rect x="589.00" y="85.50" width="1" height="2.5" fill="#6c6c6c"/><rect x="594.62" y="86.00" width="1" height="2" fill="#6c6c6c"/><rect x="600.25" y="85.50" width="1" height="2.5" fill="#6c6c6c"/><rect x="605.88" y="86.00" width="1" height="2" fill="#6c6c6c"/><rect x="611.50" y="73.00" width="1" height="15" fill="#6c6c6c"/><rect x="617.12" y="86.00" width="1" height="2" fill="#6c6c6c"/><rect x="622.75" y="85.50" width="1" height="2.5" fill="#6c6c6c"/><rect x="628.38" y="86.00" width="1" height="2" fill="#6c6c6c"/><rect x="634.00" y="85.50" width="1" height="2.5" fill="#6c6c6c"/><rect x="639.62" y="86.00" width="1" height="2" fill="#6c6c6c"/><rect x="645.25" y="85.50" width="1" height="2.5" fill="#6c6c6c"/><rect x="650.88" y="86.00" width="1" height="2" fill="#6c6c6c"/><rect x="656.50" y="83.00" width="1" height="5" fill="#6c6c6c"/><rect x="662.12" y="86.00" width="1" height="2" fill="#6c6c6c"/><rect x="667.75" y="85.50" width="1" height="2.5" fill="#6c6c6c"/><rect x="673.38" y="86.00" width="1" height="2" fill="#6c6c6c"/><rect x="679.00" y="85.50" width="1" height="2.5" fill="#6c6c6c"/><rect x="684.62" y="86.00" width="1" height="2" fill="#6c6c6c"/><rect x="690.25" y="85.50" width="1" height="2.5" fill="#6c6c6c"/><rect x="695.88" y="86.00" width="1" height="2" fill="#6c6c6c"/><rect x="701.50" y="73.00" width="1" height="15" fill="#6c6c6c"/><rect x="707.12" y="86.00" width="1" height="2" fill="#6c6c6c"/><rect x="712.75" y="85.50" width="1" height="2.5" fill="#6c6c6c"/><rect x="718.38" y="86.00" width="1" height="2" fill="#6c6c6c"/><rect x="724.00" y="85.50" width="1" height="2.5" fill="#6c6c6c"/><rect x="729.62" y="86.00" width="1" height="2" fill="#6c6c6c"/><rect x="735.25" y="85.50" width="1" height="2.5" fill="#6c6c6c"/><rect x="740.88" y="86.00" width="1" height="2" fill="#6c6c6c"/><rect x="746.50" y="83.00" width="1" height="5" fill="#6c6c6c"/><rect x="752.12" y="86.00" width="1" height="2" fill="#6c6c6c"/><rect x="757.75" y="85.50" width="1" height="2.5" fill="#6c6c6c"/><rect x="763.38" y="86.00" width="1" height="2" fill="#6c6c6c"/><rect x="769.00" y="85.50" width="1" height="2.5" fill="#6c6c6c"/><rect x="774.62" y="86.00" width="1" height="2" fill="#6c6c6c"/><rect x="780.25" y="85.50" width="1" height="2.5" fill="#6c6c6c"/><rect x="785.88" y="86.00" width="1" height="2" fill="#6c6c6c"/><rect x="791.50" y="73.00" width="1" height="15" fill="#6c6c6c"/><rect x="797.12" y="86.00" width="1" height="2" fill="#6c6c6c"/><rect x="802.75" y="85.50" width="1" height="2.5" fill="#6c6c6c"/><rect x="808.38" y="86.00" width="1" height="2" fill="#6c6c6c"/><rect x="814.00" y="85.50" width="1" height="2.5" fill="#6c6c6c"/><rect x="819.62" y="86.00" width="1" height="2" fill="#6c6c6c"/><rect x="825.25" y="85.50" width="1" height="2.5" fill="#6c6c6c"/><rect x="830.88" y="86.00" width="1" height="2" fill="#6c6c6c"/><rect x="836.50" y="83.00" width="1" height="5" fill="#6c6c6c"/><rect x="842.12" y="86.00" width="1" height="2" fill="#6c6c6c"/><rect x="847.75" y="85.50" width="1" height="2.5" fill="#6c6c6c"/><rect x="853.38" y="86.00" width="1" height="2" fill="#6c6c6c"/><rect x="859.00" y="85.50" width="1" height="2.5" fill="#6c6c6c"/><rect x="864.62" y="86.00" width="1" height="2" fill="#6c6c6c"/><rect x="870.25" y="85.50" width="1" height="2.5" fill="#6c6c6c"/><rect x="875.88" y="86.00" width="1" height="2" fill="#6c6c6c"/><rect x="881.50" y="73.00" width="1" height="15" fill="#6c6c6c"/><rect x="887.12" y="86.00" width="1" height="2" fill="#6c6c6c"/><rect x="892.75" y="85.50" width="1" height="2.5" fill="#6c6c6c"/><rect x="898.38" y="86.00" width="1" height="2" fill="#6c6c6c"/><rect x="904.00" y="85.50" width="1" height="2.5" fill="#6c6c6c"/><rect x="909.62" y="86.00" width="1" height="2" fill="#6c6c6c"/><rect x="915.25" y="85.50" width="1" height="2.5" fill="#6c6c6c"/><rect x="920.88" y="86.00" width="1" height="2" fill="#6c6c6c"/><rect x="926.50" y="83.00" width="1" height="5" fill="#6c6c6c"/><rect x="932.12" y="86.00" width="1" height="2" fill="#6c6c6c"/><rect x="937.75" y="85.50" width="1" height="2.5" fill="#6c6c6c"/><rect x="943.38" y="86.00" width="1" height="2" fill="#6c6c6c"/><rect x="949.00" y="85.50" width="1" height="2.5" fill="#6c6c6c"/><rect x="954.62" y="86.00" width="1" height="2" fill="#6c6c6c"/><rect x="960.25" y="85.50" width="1" height="2.5" fill="#6c6c6c"/><rect x="965.88" y="86.00" width="1" height="2" fill="#6c6c6c"/><rect x="971.50" y="73.00" width="1" height="15" fill="#6c6c6c"/><rect x="977.12" y="86.00" width="1" height="2" fill="#6c6c6c"/><rect x="982.75" y="85.50" width="1" height="2.5" fill="#6c6c6c"/><rect x="988.38" y="86.00" width="1" height="2" fill="#6c6c6c"/><rect x="994.00" y="85.50" width="1" height="2.5" fill="#6c6c6c"/><rect x="999.62" y="86.00" width="1" height="2" fill="#6c6c6c"/><rect x="1005.25" y="85.50" width="1" height="2.5" fill="#6c6c6c"/><rect x="1010.88" y="86.00" width="1" height="2" fill="#6c6c6c"/><rect x="1016.50" y="83.00" width="1" height="5" fill="#6c6c6c"/><rect x="1022.12" y="86.00" width="1" height="2" fill="#6c6c6c"/><rect x="1027.75" y="85.50" width="1" height="2.5" fill="#6c6c6c"/><rect x="1033.38" y="86.00" width="1" height="2" fill="#6c6c6c"/><rect x="1039.00" y="85.50" width="1" height="2.5" fill="#6c6c6c"/><rect x="1044.62" y="86.00" width="1" height="2" fill="#6c6c6c"/><rect x="1050.25" y="85.50" width="1" height="2.5" fill="#6c6c6c"/><rect x="1055.88" y="86.00" width="1" height="2" fill="#6c6c6c"/><rect x="1061.50" y="73.00" width="1" height="15" fill="#6c6c6c"/><rect x="1067.12" y="86.00" width="1" height="2" fill="#6c6c6c"/><rect x="1072.75" y="85.50" width="1" height="2.5" fill="#6c6c6c"/><rect x="1078.38" y="86.00" width="1" height="2" fill="#6c6c6c"/><rect x="1084.00" y="85.50" width="1" height="2.5" fill="#6c6c6c"/><rect x="1089.62" y="86.00" width="1" height="2" fill="#6c6c6c"/><rect x="1095.25" y="85.50" width="1" height="2.5" fill="#6c6c6c"/><rect x="1100.88" y="86.00" width="1" height="2" fill="#6c6c6c"/><rect x="1106.50" y="83.00" width="1" height="5" fill="#6c6c6c"/><rect x="1112.12" y="86.00" width="1" height="2" fill="#6c6c6c"/><rect x="1117.75" y="85.50" width="1" height="2.5" fill="#6c6c6c"/><rect x="1123.38" y="86.00" width="1" height="2" fill="#6c6c6c"/><rect x="1129.00" y="85.50" width="1" height="2.5" fill="#6c6c6c"/><rect x="1134.62" y="86.00" width="1" height="2" fill="#6c6c6c"/><rect x="1140.25" y="85.50" width="1" height="2.5" fill="#6c6c6c"/><rect x="1145.88" y="86.00" width="1" height="2" fill="#6c6c6c"/><text x="73.5" y="83.9" font-size="8.6" fill="#8f8f8f">0</text><text x="163.5" y="83.9" font-size="8.6" fill="#8f8f8f">1</text><text x="253.5" y="83.9" font-size="8.6" fill="#8f8f8f">2</text><text x="343.5" y="83.9" font-size="8.6" fill="#8f8f8f">3</text><text x="433.5" y="83.9" font-size="8.6" fill="#8f8f8f">4</text><text x="523.5" y="83.9" font-size="8.6" fill="#8f8f8f">5</text><text x="613.5" y="83.9" font-size="8.6" fill="#8f8f8f">6</text><text x="703.5" y="83.9" font-size="8.6" fill="#8f8f8f">7</text><text x="793.5" y="83.9" font-size="8.6" fill="#8f8f8f">8</text><text x="883.5" y="83.9" font-size="8.6" fill="#8f8f8f">9</text><text x="973.5" y="83.9" font-size="8.6" fill="#8f8f8f">10</text><text x="1063.5" y="83.9" font-size="8.6" fill="#8f8f8f">11</text><rect x="985.5" y="74" width="1.3" height="10" fill="#cfcfcf"/></svg>
<svg style="left:0;top:0" width="1600" height="900" viewBox="0 0 1600 900"><rect x="46.50" y="89.75" width="2.5" height="1" fill="#6c6c6c"/><rect x="47.00" y="95.38" width="2" height="1" fill="#6c6c6c"/><rect x="46.50" y="101.00" width="2.5" height="1" fill="#6c6c6c"/><rect x="47.00" y="106.62" width="2" height="1" fill="#6c6c6c"/><rect x="46.50" y="112.25" width="2.5" height="1" fill="#6c6c6c"/><rect x="47.00" y="117.88" width="2" height="1" fill="#6c6c6c"/><rect x="44.00" y="123.50" width="5" height="1" fill="#6c6c6c"/><rect x="47.00" y="129.12" width="2" height="1" fill="#6c6c6c"/><rect x="46.50" y="134.75" width="2.5" height="1" fill="#6c6c6c"/><rect x="47.00" y="140.38" width="2" height="1" fill="#6c6c6c"/><rect x="46.50" y="146.00" width="2.5" height="1" fill="#6c6c6c"/><rect x="47.00" y="151.62" width="2" height="1" fill="#6c6c6c"/><rect x="46.50" y="157.25" width="2.5" height="1" fill="#6c6c6c"/><rect x="47.00" y="162.88" width="2" height="1" fill="#6c6c6c"/><rect x="35" y="168.50" width="14" height="1" fill="#6c6c6c"/><rect x="47.00" y="174.12" width="2" height="1" fill="#6c6c6c"/><rect x="46.50" y="179.75" width="2.5" height="1" fill="#6c6c6c"/><rect x="47.00" y="185.38" width="2" height="1" fill="#6c6c6c"/><rect x="46.50" y="191.00" width="2.5" height="1" fill="#6c6c6c"/><rect x="47.00" y="196.62" width="2" height="1" fill="#6c6c6c"/><rect x="46.50" y="202.25" width="2.5" height="1" fill="#6c6c6c"/><rect x="47.00" y="207.88" width="2" height="1" fill="#6c6c6c"/><rect x="44.00" y="213.50" width="5" height="1" fill="#6c6c6c"/><rect x="47.00" y="219.12" width="2" height="1" fill="#6c6c6c"/><rect x="46.50" y="224.75" width="2.5" height="1" fill="#6c6c6c"/><rect x="47.00" y="230.38" width="2" height="1" fill="#6c6c6c"/><rect x="46.50" y="236.00" width="2.5" height="1" fill="#6c6c6c"/><rect x="47.00" y="241.62" width="2" height="1" fill="#6c6c6c"/><rect x="46.50" y="247.25" width="2.5" height="1" fill="#6c6c6c"/><rect x="47.00" y="252.88" width="2" height="1" fill="#6c6c6c"/><rect x="35" y="258.50" width="14" height="1" fill="#6c6c6c"/><rect x="47.00" y="264.12" width="2" height="1" fill="#6c6c6c"/><rect x="46.50" y="269.75" width="2.5" height="1" fill="#6c6c6c"/><rect x="47.00" y="275.38" width="2" height="1" fill="#6c6c6c"/><rect x="46.50" y="281.00" width="2.5" height="1" fill="#6c6c6c"/><rect x="47.00" y="286.62" width="2" height="1" fill="#6c6c6c"/><rect x="46.50" y="292.25" width="2.5" height="1" fill="#6c6c6c"/><rect x="47.00" y="297.88" width="2" height="1" fill="#6c6c6c"/><rect x="44.00" y="303.50" width="5" height="1" fill="#6c6c6c"/><rect x="47.00" y="309.12" width="2" height="1" fill="#6c6c6c"/><rect x="46.50" y="314.75" width="2.5" height="1" fill="#6c6c6c"/><rect x="47.00" y="320.38" width="2" height="1" fill="#6c6c6c"/><rect x="46.50" y="326.00" width="2.5" height="1" fill="#6c6c6c"/><rect x="47.00" y="331.62" width="2" height="1" fill="#6c6c6c"/><rect x="46.50" y="337.25" width="2.5" height="1" fill="#6c6c6c"/><rect x="47.00" y="342.88" width="2" height="1" fill="#6c6c6c"/><rect x="35" y="348.50" width="14" height="1" fill="#6c6c6c"/><rect x="47.00" y="354.12" width="2" height="1" fill="#6c6c6c"/><rect x="46.50" y="359.75" width="2.5" height="1" fill="#6c6c6c"/><rect x="47.00" y="365.38" width="2" height="1" fill="#6c6c6c"/><rect x="46.50" y="371.00" width="2.5" height="1" fill="#6c6c6c"/><rect x="47.00" y="376.62" width="2" height="1" fill="#6c6c6c"/><rect x="46.50" y="382.25" width="2.5" height="1" fill="#6c6c6c"/><rect x="47.00" y="387.88" width="2" height="1" fill="#6c6c6c"/><rect x="44.00" y="393.50" width="5" height="1" fill="#6c6c6c"/><rect x="47.00" y="399.12" width="2" height="1" fill="#6c6c6c"/><rect x="46.50" y="404.75" width="2.5" height="1" fill="#6c6c6c"/><rect x="47.00" y="410.38" width="2" height="1" fill="#6c6c6c"/><rect x="46.50" y="416.00" width="2.5" height="1" fill="#6c6c6c"/><rect x="47.00" y="421.62" width="2" height="1" fill="#6c6c6c"/><rect x="46.50" y="427.25" width="2.5" height="1" fill="#6c6c6c"/><rect x="47.00" y="432.88" width="2" height="1" fill="#6c6c6c"/><rect x="35" y="438.50" width="14" height="1" fill="#6c6c6c"/><rect x="47.00" y="444.12" width="2" height="1" fill="#6c6c6c"/><rect x="46.50" y="449.75" width="2.5" height="1" fill="#6c6c6c"/><rect x="47.00" y="455.38" width="2" height="1" fill="#6c6c6c"/><rect x="46.50" y="461.00" width="2.5" height="1" fill="#6c6c6c"/><rect x="47.00" y="466.62" width="2" height="1" fill="#6c6c6c"/><rect x="46.50" y="472.25" width="2.5" height="1" fill="#6c6c6c"/><rect x="47.00" y="477.88" width="2" height="1" fill="#6c6c6c"/><rect x="44.00" y="483.50" width="5" height="1" fill="#6c6c6c"/><rect x="47.00" y="489.12" width="2" height="1" fill="#6c6c6c"/><rect x="46.50" y="494.75" width="2.5" height="1" fill="#6c6c6c"/><rect x="47.00" y="500.38" width="2" height="1" fill="#6c6c6c"/><rect x="46.50" y="506.00" width="2.5" height="1" fill="#6c6c6c"/><rect x="47.00" y="511.62" width="2" height="1" fill="#6c6c6c"/><rect x="46.50" y="517.25" width="2.5" height="1" fill="#6c6c6c"/><rect x="47.00" y="522.88" width="2" height="1" fill="#6c6c6c"/><rect x="35" y="528.50" width="14" height="1" fill="#6c6c6c"/><rect x="47.00" y="534.12" width="2" height="1" fill="#6c6c6c"/><rect x="46.50" y="539.75" width="2.5" height="1" fill="#6c6c6c"/><rect x="47.00" y="545.38" width="2" height="1" fill="#6c6c6c"/><rect x="46.50" y="551.00" width="2.5" height="1" fill="#6c6c6c"/><rect x="47.00" y="556.62" width="2" height="1" fill="#6c6c6c"/><rect x="46.50" y="562.25" width="2.5" height="1" fill="#6c6c6c"/><rect x="47.00" y="567.88" width="2" height="1" fill="#6c6c6c"/><rect x="44.00" y="573.50" width="5" height="1" fill="#6c6c6c"/><rect x="47.00" y="579.12" width="2" height="1" fill="#6c6c6c"/><rect x="46.50" y="584.75" width="2.5" height="1" fill="#6c6c6c"/><rect x="47.00" y="590.38" width="2" height="1" fill="#6c6c6c"/><rect x="46.50" y="596.00" width="2.5" height="1" fill="#6c6c6c"/><rect x="47.00" y="601.62" width="2" height="1" fill="#6c6c6c"/><rect x="46.50" y="607.25" width="2.5" height="1" fill="#6c6c6c"/><rect x="47.00" y="612.88" width="2" height="1" fill="#6c6c6c"/><rect x="35" y="618.50" width="14" height="1" fill="#6c6c6c"/><rect x="47.00" y="624.12" width="2" height="1" fill="#6c6c6c"/><rect x="46.50" y="629.75" width="2.5" height="1" fill="#6c6c6c"/><rect x="47.00" y="635.38" width="2" height="1" fill="#6c6c6c"/><rect x="46.50" y="641.00" width="2.5" height="1" fill="#6c6c6c"/><rect x="47.00" y="646.62" width="2" height="1" fill="#6c6c6c"/><rect x="46.50" y="652.25" width="2.5" height="1" fill="#6c6c6c"/><rect x="47.00" y="657.88" width="2" height="1" fill="#6c6c6c"/><rect x="44.00" y="663.50" width="5" height="1" fill="#6c6c6c"/><rect x="47.00" y="669.12" width="2" height="1" fill="#6c6c6c"/><rect x="46.50" y="674.75" width="2.5" height="1" fill="#6c6c6c"/><rect x="47.00" y="680.38" width="2" height="1" fill="#6c6c6c"/><rect x="46.50" y="686.00" width="2.5" height="1" fill="#6c6c6c"/><rect x="47.00" y="691.62" width="2" height="1" fill="#6c6c6c"/><rect x="46.50" y="697.25" width="2.5" height="1" fill="#6c6c6c"/><rect x="47.00" y="702.88" width="2" height="1" fill="#6c6c6c"/><rect x="35" y="708.50" width="14" height="1" fill="#6c6c6c"/><rect x="47.00" y="714.12" width="2" height="1" fill="#6c6c6c"/><rect x="46.50" y="719.75" width="2.5" height="1" fill="#6c6c6c"/><rect x="47.00" y="725.38" width="2" height="1" fill="#6c6c6c"/><rect x="46.50" y="731.00" width="2.5" height="1" fill="#6c6c6c"/><rect x="47.00" y="736.62" width="2" height="1" fill="#6c6c6c"/><rect x="46.50" y="742.25" width="2.5" height="1" fill="#6c6c6c"/><rect x="47.00" y="747.88" width="2" height="1" fill="#6c6c6c"/><rect x="44.00" y="753.50" width="5" height="1" fill="#6c6c6c"/><rect x="47.00" y="759.12" width="2" height="1" fill="#6c6c6c"/><rect x="46.50" y="764.75" width="2.5" height="1" fill="#6c6c6c"/><rect x="47.00" y="770.38" width="2" height="1" fill="#6c6c6c"/><rect x="46.50" y="776.00" width="2.5" height="1" fill="#6c6c6c"/><rect x="47.00" y="781.62" width="2" height="1" fill="#6c6c6c"/><rect x="46.50" y="787.25" width="2.5" height="1" fill="#6c6c6c"/><rect x="47.00" y="792.88" width="2" height="1" fill="#6c6c6c"/><rect x="35" y="798.50" width="14" height="1" fill="#6c6c6c"/><rect x="47.00" y="804.12" width="2" height="1" fill="#6c6c6c"/><rect x="46.50" y="809.75" width="2.5" height="1" fill="#6c6c6c"/><rect x="47.00" y="815.38" width="2" height="1" fill="#6c6c6c"/><rect x="46.50" y="821.00" width="2.5" height="1" fill="#6c6c6c"/><rect x="47.00" y="826.62" width="2" height="1" fill="#6c6c6c"/><rect x="46.50" y="832.25" width="2.5" height="1" fill="#6c6c6c"/><rect x="47.00" y="837.88" width="2" height="1" fill="#6c6c6c"/><rect x="44.00" y="843.50" width="5" height="1" fill="#6c6c6c"/><rect x="47.00" y="849.12" width="2" height="1" fill="#6c6c6c"/><rect x="46.50" y="854.75" width="2.5" height="1" fill="#6c6c6c"/><rect x="47.00" y="860.38" width="2" height="1" fill="#6c6c6c"/><rect x="46.50" y="866.00" width="2.5" height="1" fill="#6c6c6c"/><rect x="47.00" y="871.62" width="2" height="1" fill="#6c6c6c"/><rect x="46.50" y="877.25" width="2.5" height="1" fill="#6c6c6c"/><rect x="47.00" y="882.88" width="2" height="1" fill="#6c6c6c"/><text x="40" y="177.7" font-size="9" fill="#8f8f8f">0</text><text x="40" y="267.7" font-size="9" fill="#8f8f8f">1</text><text x="40" y="357.7" font-size="9" fill="#8f8f8f">2</text><text x="40" y="447.7" font-size="9" fill="#8f8f8f">3</text><text x="40" y="537.7" font-size="9" fill="#8f8f8f">4</text><text x="40" y="627.7" font-size="9" fill="#8f8f8f">5</text><text x="40" y="717.7" font-size="9" fill="#8f8f8f">6</text><text x="40" y="807.7" font-size="9" fill="#8f8f8f">7</text><rect x="37" y="476" width="9" height="1.3" fill="#cfcfcf"/></svg>
<svg style="left:0;top:0" width="1600" height="900" viewBox="0 0 1600 900"><defs><clipPath id="docclip"><rect x="72" y="169" width="1057" height="596"/></clipPath></defs><rect x="72" y="169" width="1058" height="597" fill="#000" opacity="0.7" transform="translate(0.6,0.6)"/><g clip-path="url(#docclip)">
<defs>
<linearGradient id="cupg" x1="0" x2="1" y1="0" y2="0">
<stop offset="0" stop-color="#dedede"/><stop offset="0.08" stop-color="#efefef"/><stop offset="0.3" stop-color="#ebebeb"/><stop offset="0.55" stop-color="#d6d6d6"/><stop offset="0.8" stop-color="#bdbdbd"/><stop offset="0.93" stop-color="#c8c8c8"/><stop offset="1" stop-color="#d6d6d6"/>
</linearGradient>
<linearGradient id="cupshade" x1="0" x2="0" y1="0" y2="1">
<stop offset="0" stop-color="#000" stop-opacity="0.45"/><stop offset="0.4" stop-color="#000" stop-opacity="0.15"/><stop offset="1" stop-color="#000" stop-opacity="0"/>
</linearGradient>
<linearGradient id="cupshade2b" x1="0" x2="0" y1="0" y2="1">
<stop offset="0" stop-color="#000" stop-opacity="0.18"/><stop offset="0.25" stop-color="#000" stop-opacity="0.03"/><stop offset="0.9" stop-color="#000" stop-opacity="0"/><stop offset="1" stop-color="#000" stop-opacity="0.08"/>
</linearGradient>
<linearGradient id="lidg" x1="0" x2="1" y1="0" y2="0">
<stop offset="0" stop-color="#262626"/><stop offset="0.15" stop-color="#2e2e2e"/><stop offset="0.5" stop-color="#303030"/><stop offset="0.85" stop-color="#2c2c2c"/><stop offset="1" stop-color="#222"/>
</linearGradient>
</defs>
<rect x="72" y="169" width="1057" height="596" fill="#ffffff"/>
<path d="M453 262 L748 262 L741 380 L460 380 Z" fill="url(#cupg)"/>
<path d="M453 262 L748 262 L744.5 305 L456.5 305 Z" fill="url(#cupshade)"/>
<path d="M484 560 L716 560 L703 709 C692 730 510 732 496 709 Z" fill="url(#cupg)"/>
<path d="M484 590 L716 590 L703 709 C692 730 510 732 496 709 Z" fill="url(#cupshade2b)"/>
<path d="M496 709 C510 732 692 730 703 709" fill="none" stroke="#8a8a8a" stroke-width="0.9" opacity="0.6"/>
<path d="M436 273 C441 269 444 263 443 257 C440 252 441 245 449 242 L457 241 L459 221 Q459 216 466 215.5 Q600 199.5 734 215.5 Q741 216 741.5 221 L745 240 L751 241 C759 244 760 251 757 257 C756 263 759 269 764 273 Q762 276.5 748 275.5 Q736 271.5 720 269.5 Q600 264.5 480 269.5 Q465 271.5 452 275.5 Q438 276.5 436 273 Z" fill="url(#lidg)"/>
<path d="M449 242.5 Q600 230 751 241.5" fill="none" stroke="#3a3a3a" stroke-width="1.2" opacity="0.9"/>
<path d="M443 252 Q600 239 757 252" fill="none" stroke="#232323" stroke-width="2" opacity="0.9"/>
<path d="M444 261 Q600 248 756 261" fill="none" stroke="#363636" stroke-width="3.5" opacity="0.85"/>
<path d="M123.89,448.52 L162.02,437.91 Q167.80,436.30 168.60,439.19 Q167.80,436.30 175.70,431.60 A1321.90,1321.90 0 0 1 1081.86,448.22 A29.00,29.00 0 0 1 1097.72,485.87 L1027.39,655.20 A24.00,24.00 0 0 1 996.10,668.19 L964.75,655.30 Q955.50,651.50 954.17,654.74 Q955.50,651.50 950.32,648.05 A1089.30,1089.30 0 0 0 199.92,670.72 A24.00,24.00 0 0 1 167.92,656.90 L103.89,488.06 A30.00,30.00 0 0 1 123.89,448.52 Z" fill="#f2f2f3" stroke="#555555" stroke-width="1.2"/>
<path d="M153.64,460.29 L131.99,467.00 A12.00,12.00 0 0 0 124.32,482.72 L184.56,641.58 A12.00,12.00 0 0 0 200.32,648.50 A1109.80,1109.80 0 0 1 949.74,626.28 A8.00,8.00 0 0 0 959.78,621.44 L990.27,539.23 A9.00,9.00 0 0 1 1001.83,533.92 L1002.77,534.27 A9.00,9.00 0 0 1 1008.08,545.83 L975.94,632.51 A5.00,5.00 0 0 0 978.77,638.89 L995.77,645.69 A12.00,12.00 0 0 0 1011.31,639.15 L1076.46,482.32 A12.00,12.00 0 0 0 1069.74,466.60 A1300.40,1300.40 0 0 0 184.27,451.38 A8.00,8.00 0 0 0 179.37,461.61 L208.61,543.27 A9.00,9.00 0 0 1 203.17,554.78 L202.23,555.11 A9.00,9.00 0 0 1 190.72,549.67 L159.82,463.38 A5.00,5.00 0 0 0 153.64,460.29 Z" fill="none" stroke="#ffffff" stroke-width="1.1" stroke-dasharray="6.5 5.8" opacity="0.6"/>
<path d="M199.50,546.00 L164.79,449.05 A3.00,3.00 0 0 0 161.07,447.20 L121.52,459.46 A15.00,15.00 0 0 0 111.94,479.11 L177.76,652.68 A15.00,15.00 0 0 0 197.60,661.31 A1098.90,1098.90 0 0 1 951.21,638.23 A12.00,12.00 0 0 0 966.37,630.99 L999.00,543.00" fill="none" stroke="#ff6262" stroke-width="1.1"/>
<path d="M961.84,643.21 L998.64,657.93 A15.00,15.00 0 0 0 1018.06,649.76 L1088.97,479.04 A15.00,15.00 0 0 0 1080.68,459.45 A1311.00,1311.00 0 0 0 176.39,442.89 A13.00,13.00 0 0 0 168.51,459.45 L168.85,460.39 M962.89,640.40 L961.84,643.21" fill="none" stroke="#ff6262" stroke-width="1.1"/>
</g></svg>
<svg style="left:1261px;top:89px;overflow:hidden" width="277" height="154" viewBox="72 169 1057 596" preserveAspectRatio="none"><g>
<defs>
<linearGradient id="cupg2" x1="0" x2="1" y1="0" y2="0">
<stop offset="0" stop-color="#dedede"/><stop offset="0.08" stop-color="#efefef"/><stop offset="0.3" stop-color="#ebebeb"/><stop offset="0.55" stop-color="#d6d6d6"/><stop offset="0.8" stop-color="#bdbdbd"/><stop offset="0.93" stop-color="#c8c8c8"/><stop offset="1" stop-color="#d6d6d6"/>
</linearGradient>
<linearGradient id="cupshade2" x1="0" x2="0" y1="0" y2="1">
<stop offset="0" stop-color="#000" stop-opacity="0.45"/><stop offset="0.4" stop-color="#000" stop-opacity="0.15"/><stop offset="1" stop-color="#000" stop-opacity="0"/>
</linearGradient>
<linearGradient id="cupshade2c" x1="0" x2="0" y1="0" y2="1">
<stop offset="0" stop-color="#000" stop-opacity="0.18"/><stop offset="0.25" stop-color="#000" stop-opacity="0.03"/><stop offset="0.9" stop-color="#000" stop-opacity="0"/><stop offset="1" stop-color="#000" stop-opacity="0.08"/>
</linearGradient>
<linearGradient id="lidg2" x1="0" x2="1" y1="0" y2="0">
<stop offset="0" stop-color="#262626"/><stop offset="0.15" stop-color="#2e2e2e"/><stop offset="0.5" stop-color="#303030"/><stop offset="0.85" stop-color="#2c2c2c"/><stop offset="1" stop-color="#222"/>
</linearGradient>
</defs>
<rect x="72" y="169" width="1057" height="596" fill="#ffffff"/>
<path d="M453 262 L748 262 L741 380 L460 380 Z" fill="url(#cupg2)"/>
<path d="M453 262 L748 262 L744.5 305 L456.5 305 Z" fill="url(#cupshade2)"/>
<path d="M484 560 L716 560 L703 709 C692 730 510 732 496 709 Z" fill="url(#cupg2)"/>
<path d="M484 590 L716 590 L703 709 C692 730 510 732 496 709 Z" fill="url(#cupshade2c)"/>
<path d="M496 709 C510 732 692 730 703 709" fill="none" stroke="#8a8a8a" stroke-width="0.9" opacity="0.6"/>
<path d="M436 273 C441 269 444 263 443 257 C440 252 441 245 449 242 L457 241 L459 221 Q459 216 466 215.5 Q600 199.5 734 215.5 Q741 216 741.5 221 L745 240 L751 241 C759 244 760 251 757 257 C756 263 759 269 764 273 Q762 276.5 748 275.5 Q736 271.5 720 269.5 Q600 264.5 480 269.5 Q465 271.5 452 275.5 Q438 276.5 436 273 Z" fill="url(#lidg2)"/>
<path d="M449 242.5 Q600 230 751 241.5" fill="none" stroke="#3a3a3a" stroke-width="1.2" opacity="0.9"/>
<path d="M443 252 Q600 239 757 252" fill="none" stroke="#232323" stroke-width="2" opacity="0.9"/>
<path d="M444 261 Q600 248 756 261" fill="none" stroke="#363636" stroke-width="3.5" opacity="0.85"/>
<path d="M123.89,448.52 L162.02,437.91 Q167.80,436.30 168.60,439.19 Q167.80,436.30 175.70,431.60 A1321.90,1321.90 0 0 1 1081.86,448.22 A29.00,29.00 0 0 1 1097.72,485.87 L1027.39,655.20 A24.00,24.00 0 0 1 996.10,668.19 L964.75,655.30 Q955.50,651.50 954.17,654.74 Q955.50,651.50 950.32,648.05 A1089.30,1089.30 0 0 0 199.92,670.72 A24.00,24.00 0 0 1 167.92,656.90 L103.89,488.06 A30.00,30.00 0 0 1 123.89,448.52 Z" fill="#f2f2f3" stroke="#8a8a8a" stroke-width="3.2"/>
<path d="M153.64,460.29 L131.99,467.00 A12.00,12.00 0 0 0 124.32,482.72 L184.56,641.58 A12.00,12.00 0 0 0 200.32,648.50 A1109.80,1109.80 0 0 1 949.74,626.28 A8.00,8.00 0 0 0 959.78,621.44 L990.27,539.23 A9.00,9.00 0 0 1 1001.83,533.92 L1002.77,534.27 A9.00,9.00 0 0 1 1008.08,545.83 L975.94,632.51 A5.00,5.00 0 0 0 978.77,638.89 L995.77,645.69 A12.00,12.00 0 0 0 1011.31,639.15 L1076.46,482.32 A12.00,12.00 0 0 0 1069.74,466.60 A1300.40,1300.40 0 0 0 184.27,451.38 A8.00,8.00 0 0 0 179.37,461.61 L208.61,543.27 A9.00,9.00 0 0 1 203.17,554.78 L202.23,555.11 A9.00,9.00 0 0 1 190.72,549.67 L159.82,463.38 A5.00,5.00 0 0 0 153.64,460.29 Z" fill="none" stroke="#ffffff" stroke-width="1.1" stroke-dasharray="6.5 5.8" opacity="0.6"/>
<path d="M199.50,546.00 L164.79,449.05 A3.00,3.00 0 0 0 161.07,447.20 L121.52,459.46 A15.00,15.00 0 0 0 111.94,479.11 L177.76,652.68 A15.00,15.00 0 0 0 197.60,661.31 A1098.90,1098.90 0 0 1 951.21,638.23 A12.00,12.00 0 0 0 966.37,630.99 L999.00,543.00" fill="none" stroke="#ff8080" stroke-width="2.6"/>
<path d="M961.84,643.21 L998.64,657.93 A15.00,15.00 0 0 0 1018.06,649.76 L1088.97,479.04 A15.00,15.00 0 0 0 1080.68,459.45 A1311.00,1311.00 0 0 0 176.39,442.89 A13.00,13.00 0 0 0 168.51,459.45 L168.85,460.39 M962.89,640.40 L961.84,643.21" fill="none" stroke="#ff8080" stroke-width="2.6"/>
</g></svg></body></html>
